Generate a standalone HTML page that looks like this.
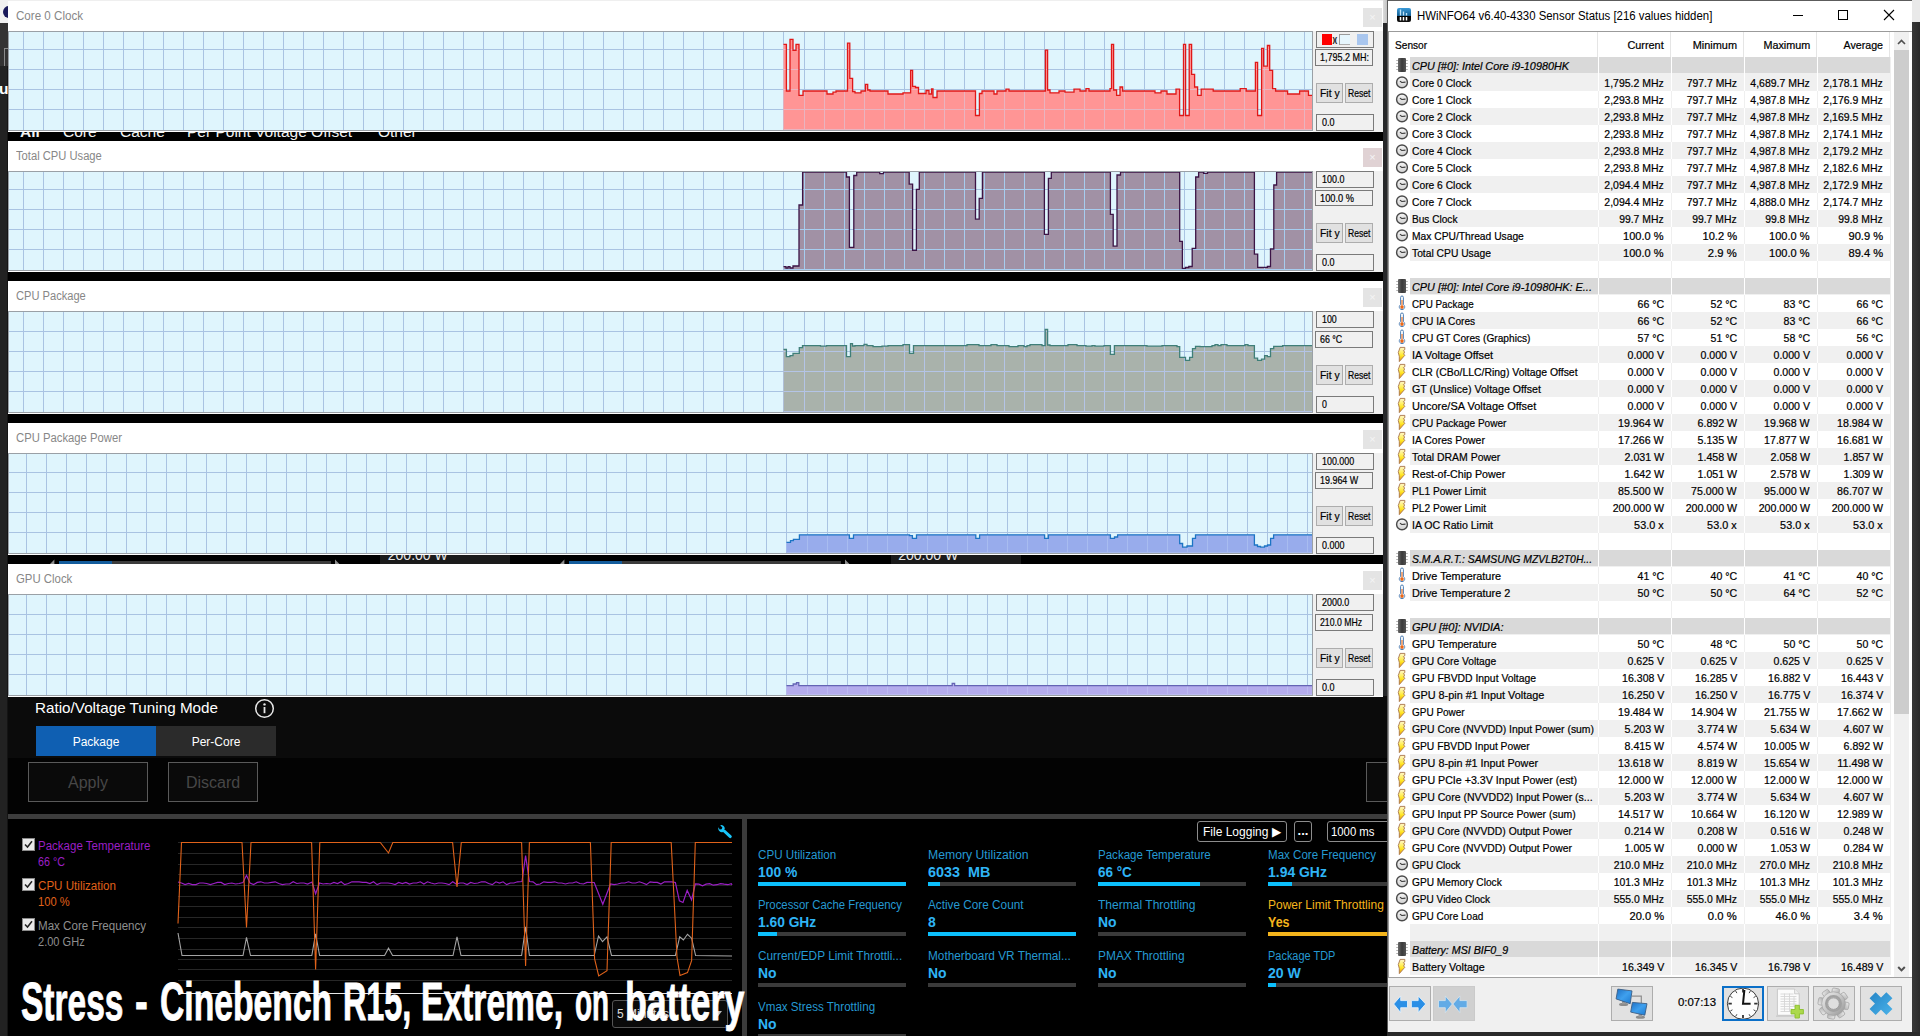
<!DOCTYPE html><html><head><meta charset="utf-8"><title>Stress - Cinebench R15</title><style>

*{margin:0;padding:0}
html,body{width:1920px;height:1036px;overflow:hidden;background:#000;font-family:"Liberation Sans",sans-serif}
body{position:relative;font-family:"Liberation Sans",sans-serif}
#ls{position:absolute;left:0;top:0;width:8px;height:1036px;background:#222;box-shadow:inset -1px 0 0 #141414}
#ls .t{position:absolute;left:0;top:0;width:8px;height:23px;background:#f1f1f1;overflow:hidden}
#ls .m{position:absolute;left:0;top:23px;width:8px;height:43px;background:#343333}
#ls .k{position:absolute;left:4px;top:48px;width:4px;height:18px;border-left:1px solid #8a8a8a;border-top:1px solid #8a8a8a;box-sizing:border-box}
#ls .u{position:absolute;left:-1px;top:80px;font-size:15.5px;line-height:18px;font-weight:bold;color:#fff;width:9px;overflow:hidden}
#ls .t i{position:absolute;left:3px;top:6px;width:12px;height:12px;border-radius:6px;background:#1a1a5a}
#topl{position:absolute;left:8px;top:0;width:1375px;height:1px;background:#efefef}
#rs1{position:absolute;left:1383px;top:0;width:5px;height:1036px;background:#27282a}
#rs1 .t{position:absolute;left:0;top:0;width:5px;height:23px;background:linear-gradient(90deg,#dcdcdc,#bdbdbd)}
#rs2{position:absolute;left:1912px;top:0;width:8px;height:1036px;background:linear-gradient(90deg,#383838,#2b2b2b)}
#rs2 .t{position:absolute;left:0;top:0;width:8px;height:22px;background:#e9e9e9}
#bs{position:absolute;left:1387px;top:1032px;width:533px;height:4px;background:#2a2a2a}

.f{display:inline-block;white-space:nowrap}


.pn{position:absolute;left:8px;width:1375px;background:#fff;overflow:hidden}
.pt{position:absolute;left:8px;font-size:12px;line-height:16px;color:#878787;white-space:nowrap}
.sd{position:absolute;left:1305px;width:70px;background:#f0f0f0}
.cl{position:absolute;left:1355px;width:19px;color:#f4f4f4;font-size:11px;text-align:center}
.cl span{position:absolute;left:0;right:0;top:2px;line-height:14px}
.gs{position:absolute;display:block}
.bx{position:absolute;box-sizing:border-box;border:1px solid #7a7a7a;background:#f0f0f0;overflow:hidden}
.bx i{position:absolute;top:2px;width:10.5px;height:10.5px}
.bx .xx{position:absolute;left:15.5px;top:2.5px;font-size:8px;line-height:10px;font-weight:bold;letter-spacing:-.6px;color:#111}
.bx .tx{position:absolute;left:5px;top:1px;font-size:10.3px;line-height:13px;color:#000;-webkit-text-stroke:.2px #000}
.bt{position:absolute;box-sizing:border-box;border:1px solid #adadad;background:#e1e1e1;font-size:11px;color:#000;text-align:center;overflow:hidden}
.bt .bs{position:absolute;top:2px;line-height:14px;font-size:10.5px;-webkit-text-stroke:.2px #000}


#xt{position:absolute;left:8px;top:696px;width:1379px;height:340px;background:#030303;overflow:hidden}
#xt .up{position:absolute;left:0;top:0;width:1379px;height:62px;background:#0b0b0b}
#xt .h1{position:absolute;left:27px;top:2px;font-size:15px;line-height:20px;color:#fff;white-space:nowrap;transform-origin:0 0}
#xt .tab{position:absolute;top:30px;height:30px;width:120px;color:#fff;font-size:12px;line-height:32px;text-align:center}
#xt .ab{position:absolute;top:66px;height:40px;box-sizing:border-box;border:1px solid #5a5a5a;background:#0a0a0a;color:#474747;font-size:16px;line-height:39px;text-align:center}
#xt .bar{position:absolute;left:0;top:118px;width:1379px;height:5px;background:#3d3d3d}
#xt .lp{position:absolute;left:0;top:123px;width:734px;height:217px;background:#000}
#xt .mid{position:absolute;left:734px;top:123px;width:5px;height:217px;background:#3b3b3b}
#xt .rp{position:absolute;left:739px;top:123px;width:640px;height:217px;background:#000}
.lg{position:absolute;left:30px;font-size:12px;line-height:16px;white-space:nowrap;transform-origin:0 0}
.cb{position:absolute;left:14px;width:13px;height:13px;box-sizing:border-box;border:1px solid #8a8a8a;background:#e9e9e9}
.cb svg{position:absolute;left:0;top:0}
.st{position:absolute;width:148px;height:50px}
.st .a{position:absolute;left:0;top:0;font-size:12px;line-height:16px;color:#2599d2;white-space:nowrap;transform-origin:0 0}
.st .b{position:absolute;left:0;top:16px;font-size:14px;line-height:18px;color:#2fb4f6;font-weight:bold;white-space:nowrap;transform-origin:0 0}
.st .c{position:absolute;left:0;top:35px;width:148px;height:4px;background:#3a3a3a}
.st .c i{position:absolute;left:0;top:0;height:4px;background:#0cbffc}
.st.y .a,.st.y .b{color:#f4b41c}
.st.y .c i{background:#f4b41c}
.xb{position:absolute;top:125px;height:21px;box-sizing:border-box;border:1px solid #8c8c8c;border-radius:3px;background:#000;color:#fff;font-size:13px;line-height:19px;white-space:nowrap}
#big{position:absolute;left:22px;top:970px;font-size:54.5px;line-height:64px;font-weight:bold;color:#fff;-webkit-text-stroke:0.9px #fff;white-space:nowrap;transform-origin:0 0;letter-spacing:0}
.gap{position:absolute;left:8px;width:1380px;background:#000;overflow:hidden}


#hw{position:absolute;left:1387px;top:0;width:525px;height:1032px;background:#fff;overflow:hidden}
#hw .bl{position:absolute;left:0;top:0;width:1px;height:1032px;background:#5a5a5a}
#hw .bt0{position:absolute;left:0;top:0;width:525px;height:1px;background:#5c5c5c}
#hw .ttl{position:absolute;left:30px;top:7px;font-size:12px;line-height:18px;color:#000;white-space:nowrap;transform-origin:0 0}
#hw .tl{position:absolute;left:1px;top:31px;width:524px;height:1px;background:#9b9b9b}
#hw .tll{position:absolute;left:1px;top:31px;width:1px;height:947px;background:#9b9b9b}
#hw .hd{position:absolute;top:32px;height:25px;font-size:11.6px;line-height:25px;color:#000;white-space:nowrap;-webkit-text-stroke:.22px #000}
#hw .hs{position:absolute;top:32px;width:1px;height:25px;background:#e5e5e5}
.r{position:absolute;left:8px;width:495px;height:17px;font-size:11.6px;line-height:17px;color:#000;white-space:nowrap;-webkit-text-stroke:.22px #000}
.r .bg{position:absolute;left:15px;top:0;width:480px;height:17px}
.r .bg i{position:absolute;top:0;width:1px;height:17px;background:#fff}
.r svg{position:absolute;left:0;top:0;width:14px;height:16px}
.r .n{position:absolute;left:16.5px;top:-.4px}
.r .v{position:absolute;top:-.4px}
.r.g .n{font-style:italic}
#hw .sb{position:absolute;left:507px;top:32px;width:15px;height:945px;background:#f0f0f0}
#hw .sb .th{position:absolute;left:0;top:18px;width:15px;height:664px;background:#cdcdcd}
#hw .tb{position:absolute;left:1px;top:978px;width:524px;height:54px;background:#f0f0f0}
#hw .tbl{position:absolute;left:1px;top:977px;width:524px;height:1px;background:#a0a0a0}
.tbn{position:absolute;top:986px;width:42px;height:35px;box-sizing:border-box;border:1px solid #adadad;background:#e1e1e1}
.tbn svg{position:absolute;left:0;top:0}

</style></head><body>

<svg width="0" height="0" style="position:absolute">
<defs>
<linearGradient id="gch" x1="0" x2="1" y1="0" y2="0"><stop offset="0" stop-color="#6a6a6a"/><stop offset=".5" stop-color="#3a3a3a"/><stop offset="1" stop-color="#555"/></linearGradient>
<linearGradient id="gck" x1="0" x2="0" y1="0" y2="1"><stop offset="0" stop-color="#f4f4f4"/><stop offset="1" stop-color="#d2d2d2"/></linearGradient>
<linearGradient id="gbx" gradientUnits="userSpaceOnUse" x1="8" y1="5" x2="32" y2="29"><stop offset="0" stop-color="#2484c6"/><stop offset="1" stop-color="#4cb4ea"/></linearGradient>
<linearGradient id="glt" x1="0" x2="0" y1="0" y2="1"><stop offset="0" stop-color="#fff6cc"/><stop offset=".3" stop-color="#fff27a"/><stop offset=".6" stop-color="#ffe622"/><stop offset="1" stop-color="#e68a0c"/></linearGradient>
<symbol id="ic" viewBox="0 0 14 16">
 <circle cx="7" cy="8.4" r="5.4" fill="url(#gck)" stroke="#4a4a4a" stroke-width="1.4"/>
 <path d="M4.9 7.1L6.8 8.5L10.5 8.1" stroke="#3a3a3a" stroke-width="1.1" fill="none"/>
</symbol>
<symbol id="it" viewBox="0 0 14 16">
 <path d="M5.6 2.4a1.4 1.4 0 0 1 2.8 0V9.6a2.7 2.7 0 1 1-2.8 0Z" fill="#fff" stroke="#4f7fb4" stroke-width="1"/>
 <path d="M6.45 5h1.1v5.6a1.6 1.6 0 1 1-1.1 0Z" fill="#e8681a"/>
</symbol>
<symbol id="il" viewBox="0 0 14 16">
 <path d="M5.1 1.4H9.8V3.7L8.4 4.6L9.6 6L8.6 8L9.8 9.3L4.3 15.6V10.5L3.3 6.5Z" fill="url(#glt)" stroke="#a87448" stroke-width=".9" stroke-linejoin="round"/>
</symbol>
<symbol id="ig" viewBox="0 0 14 16">
 <path d="M1.2 3.5h11.6M1.2 6.5h11.6M1.2 9.5h11.6M1.2 12.5h11.6" stroke="#b4b4b4" stroke-width="1"/>
 <rect x="3" y="1" width="8" height="14" rx="1" fill="url(#gch)"/>
</symbol>
</defs></svg>

<div id="ls"><div class="t"><i></i></div><div class="m"></div><div class="k"></div><div class="u">u</div></div>
<div class="gap" style="top:132px;height:9px"><div style="position:absolute;left:0;top:-9.5px;font-size:15.5px;line-height:18px;color:#f2f2f2;white-space:nowrap"><b style="position:absolute;left:12px">All</b><span style="position:absolute;left:55px">Core</span><span style="position:absolute;left:112px">Cache</span><span style="position:absolute;left:179px">Per Point Voltage Offset</span><span style="position:absolute;left:370px">Other</span></div></div>
<div class="gap" style="top:272px;height:9px"></div>
<div class="gap" style="top:414px;height:9px"></div>
<div class="gap" style="top:555px;height:9px"><div style="position:absolute;left:104.0px;top:6px;width:219px;height:3px;background:#3c3c3c"></div><div style="position:absolute;left:50.6px;top:6px;width:53.4px;height:3px;background:#135c9c"></div><svg style="position:absolute;left:39.6px;top:0" width="300" height="9" viewBox="0 0 300 9"><path d="M0 11L6.4 4.6V11Z" fill="#8e8e8e"/><path d="M287 4.6L293.4 11H287Z" fill="#8e8e8e"/></svg><div style="position:absolute;left:372.3px;top:0;width:130px;height:9px;background:#1b1b1b;overflow:hidden"><span style="position:absolute;left:7.5px;top:-8px;font-size:14px;line-height:16px;color:#e6e6e6;white-space:nowrap">200.00 W</span></div><div style="position:absolute;left:614.4px;top:6px;width:219px;height:3px;background:#3c3c3c"></div><div style="position:absolute;left:561.0px;top:6px;width:53.4px;height:3px;background:#135c9c"></div><svg style="position:absolute;left:550.0px;top:0" width="300" height="9" viewBox="0 0 300 9"><path d="M0 11L6.4 4.6V11Z" fill="#8e8e8e"/><path d="M287 4.6L293.4 11H287Z" fill="#8e8e8e"/></svg><div style="position:absolute;left:882.7px;top:0;width:130px;height:9px;background:#1b1b1b;overflow:hidden"><span style="position:absolute;left:7.5px;top:-8px;font-size:14px;line-height:16px;color:#e6e6e6;white-space:nowrap">200.00 W</span></div></div>
<div id="rs1"><div class="t"></div></div>
<div class="pn" style="top:1px;height:131px">
<div class="pt" style="top:7px"><span class="f" style="transform:scaleX(0.9660);transform-origin:0 0;">Core 0 Clock</span></div>
<div class="sd" style="top:30px;height:101px"></div>
<div class="cl" style="top:7px;height:19px;background:#e4e4e4"><span>×</span></div>
<svg class="gs" style="left:0;top:30px" width="1305" height="100" viewBox="8 31 1305 100" shape-rendering="crispEdges"><rect x="8" y="31" width="1305" height="100" fill="#dff5fd"/><path d="M23.5 31V130M43.5 31V130M63.5 31V130M83.5 31V130M103.5 31V130M123.5 31V130M143.5 31V130M163.5 31V130M183.5 31V130M203.5 31V130M223.5 31V130M243.5 31V130M263.5 31V130M283.5 31V130M303.5 31V130M323.5 31V130M343.5 31V130M363.5 31V130M383.5 31V130M403.5 31V130M423.5 31V130M443.5 31V130M463.5 31V130M483.5 31V130M503.5 31V130M523.5 31V130M543.5 31V130M563.5 31V130M583.5 31V130M603.5 31V130M623.5 31V130M643.5 31V130M663.5 31V130M683.5 31V130M703.5 31V130M723.5 31V130M743.5 31V130M763.5 31V130M783.5 31V130M804.5 31V130M824.5 31V130M844.5 31V130M864.5 31V130M884.5 31V130M904.5 31V130M924.5 31V130M944.5 31V130M964.5 31V130M984.5 31V130M1004.5 31V130M1024.5 31V130M1044.5 31V130M1064.5 31V130M1084.5 31V130M1104.5 31V130M1124.5 31V130M1144.5 31V130M1164.5 31V130M1184.5 31V130M1204.5 31V130M1224.5 31V130M1244.5 31V130M1264.5 31V130M1284.5 31V130M1304.5 31V130M8 109.5H1313M8 89.5H1313M8 69.5H1313M8 49.5H1313" stroke="#a9c3e2" stroke-width="1" fill="none"/><path d="M783.5 130.0L783.5 44.3L786.4 44.3L786.4 91.0L790.0 91.0L790.0 39.4L793.0 39.4L793.0 50.3L796.0 50.3L796.0 44.3L799.0 44.3L799.0 95.4L803.0 95.4L803.0 91.0L809.0 91.0L809.0 91.0L815.0 91.0L815.0 91.0L818.0 91.0L818.0 91.0L827.0 91.0L827.0 94.0L833.0 94.0L833.0 92.2L836.0 92.2L836.0 91.0L845.0 91.0L845.0 91.0L847.5 91.0L847.5 43.2L849.8 43.2L849.8 78.3L852.6 78.3L852.6 91.5L855.0 91.5L855.0 92.8L861.0 92.8L861.0 91.0L864.0 91.0L864.0 91.0L865.4 91.0L865.4 84.3L867.7 84.3L867.7 90.0L870.0 90.0L870.0 91.0L876.0 91.0L876.0 91.0L885.0 91.0L885.0 91.0L888.0 91.0L888.0 94.0L900.0 94.0L900.0 94.0L903.0 94.0L903.0 92.8L910.6 92.8L910.6 70.3L912.6 70.3L912.6 86.3L915.5 86.3L915.5 87.5L918.5 87.5L918.5 93.5L926.0 93.5L926.0 90.5L929.0 90.5L929.0 94.0L931.5 94.0L931.5 89.0L933.0 89.0L933.0 97.5L937.0 97.5L937.0 91.0L940.0 91.0L940.0 91.0L943.0 91.0L943.0 91.0L946.0 91.0L946.0 91.0L949.0 91.0L949.0 91.0L955.0 91.0L955.0 91.0L964.0 91.0L964.0 91.0L973.0 91.0L973.0 91.0L975.5 91.0L975.5 115.5L979.4 115.5L979.4 93.5L982.0 93.5L982.0 91.0L994.0 91.0L994.0 94.0L997.0 94.0L997.0 91.0L1006.0 91.0L1006.0 89.2L1009.0 89.2L1009.0 91.0L1012.0 91.0L1012.0 91.0L1024.0 91.0L1024.0 91.0L1033.0 91.0L1033.0 91.0L1042.0 91.0L1042.0 91.0L1045.4 91.0L1045.4 50.2L1047.6 50.2L1047.6 90.0L1050.0 90.0L1050.0 92.8L1059.0 92.8L1059.0 91.0L1065.0 91.0L1065.0 92.2L1074.0 92.2L1074.0 89.2L1080.0 89.2L1080.0 91.0L1086.0 91.0L1086.0 88.6L1089.0 88.6L1089.0 91.0L1092.0 91.0L1092.0 91.0L1101.0 91.0L1101.0 91.0L1110.0 91.0L1110.0 88.6L1111.5 88.6L1111.5 44.3L1113.6 44.3L1113.6 90.0L1116.6 90.0L1116.6 95.4L1120.0 95.4L1120.0 87.0L1122.6 87.0L1122.6 91.0L1125.0 91.0L1125.0 91.0L1131.0 91.0L1131.0 91.0L1140.0 91.0L1140.0 91.0L1143.0 91.0L1143.0 91.0L1149.0 91.0L1149.0 91.0L1155.0 91.0L1155.0 92.8L1161.0 92.8L1161.0 91.0L1164.0 91.0L1164.0 91.0L1167.0 91.0L1167.0 94.0L1176.0 94.0L1176.0 89.2L1179.6 89.2L1179.6 115.5L1183.5 115.5L1183.5 44.3L1185.6 44.3L1185.6 115.5L1189.2 115.5L1189.2 44.3L1191.6 44.3L1191.6 74.4L1194.6 74.4L1194.6 87.0L1197.6 87.0L1197.6 95.4L1201.2 95.4L1201.2 89.2L1213.2 89.2L1213.2 91.0L1222.2 91.0L1222.2 91.0L1231.2 91.0L1231.2 91.0L1237.2 91.0L1237.2 91.0L1240.2 91.0L1240.2 88.6L1246.2 88.6L1246.2 91.0L1255.4 91.0L1255.4 62.3L1257.6 62.3L1257.6 115.5L1261.6 115.5L1261.6 48.4L1263.6 48.4L1263.6 66.2L1267.4 66.2L1267.4 45.5L1269.7 45.5L1269.7 70.3L1272.6 70.3L1272.6 88.6L1275.6 88.6L1275.6 91.0L1287.6 91.0L1287.6 94.0L1299.6 94.0L1299.6 91.0L1308.5 91.0L1308.5 95.4L1312.5 95.4L1312.5 130.0 Z" fill="#ff9595" shape-rendering="auto"/><clipPath id="c1"><path d="M783.5 130.0L783.5 44.3L786.4 44.3L786.4 91.0L790.0 91.0L790.0 39.4L793.0 39.4L793.0 50.3L796.0 50.3L796.0 44.3L799.0 44.3L799.0 95.4L803.0 95.4L803.0 91.0L809.0 91.0L809.0 91.0L815.0 91.0L815.0 91.0L818.0 91.0L818.0 91.0L827.0 91.0L827.0 94.0L833.0 94.0L833.0 92.2L836.0 92.2L836.0 91.0L845.0 91.0L845.0 91.0L847.5 91.0L847.5 43.2L849.8 43.2L849.8 78.3L852.6 78.3L852.6 91.5L855.0 91.5L855.0 92.8L861.0 92.8L861.0 91.0L864.0 91.0L864.0 91.0L865.4 91.0L865.4 84.3L867.7 84.3L867.7 90.0L870.0 90.0L870.0 91.0L876.0 91.0L876.0 91.0L885.0 91.0L885.0 91.0L888.0 91.0L888.0 94.0L900.0 94.0L900.0 94.0L903.0 94.0L903.0 92.8L910.6 92.8L910.6 70.3L912.6 70.3L912.6 86.3L915.5 86.3L915.5 87.5L918.5 87.5L918.5 93.5L926.0 93.5L926.0 90.5L929.0 90.5L929.0 94.0L931.5 94.0L931.5 89.0L933.0 89.0L933.0 97.5L937.0 97.5L937.0 91.0L940.0 91.0L940.0 91.0L943.0 91.0L943.0 91.0L946.0 91.0L946.0 91.0L949.0 91.0L949.0 91.0L955.0 91.0L955.0 91.0L964.0 91.0L964.0 91.0L973.0 91.0L973.0 91.0L975.5 91.0L975.5 115.5L979.4 115.5L979.4 93.5L982.0 93.5L982.0 91.0L994.0 91.0L994.0 94.0L997.0 94.0L997.0 91.0L1006.0 91.0L1006.0 89.2L1009.0 89.2L1009.0 91.0L1012.0 91.0L1012.0 91.0L1024.0 91.0L1024.0 91.0L1033.0 91.0L1033.0 91.0L1042.0 91.0L1042.0 91.0L1045.4 91.0L1045.4 50.2L1047.6 50.2L1047.6 90.0L1050.0 90.0L1050.0 92.8L1059.0 92.8L1059.0 91.0L1065.0 91.0L1065.0 92.2L1074.0 92.2L1074.0 89.2L1080.0 89.2L1080.0 91.0L1086.0 91.0L1086.0 88.6L1089.0 88.6L1089.0 91.0L1092.0 91.0L1092.0 91.0L1101.0 91.0L1101.0 91.0L1110.0 91.0L1110.0 88.6L1111.5 88.6L1111.5 44.3L1113.6 44.3L1113.6 90.0L1116.6 90.0L1116.6 95.4L1120.0 95.4L1120.0 87.0L1122.6 87.0L1122.6 91.0L1125.0 91.0L1125.0 91.0L1131.0 91.0L1131.0 91.0L1140.0 91.0L1140.0 91.0L1143.0 91.0L1143.0 91.0L1149.0 91.0L1149.0 91.0L1155.0 91.0L1155.0 92.8L1161.0 92.8L1161.0 91.0L1164.0 91.0L1164.0 91.0L1167.0 91.0L1167.0 94.0L1176.0 94.0L1176.0 89.2L1179.6 89.2L1179.6 115.5L1183.5 115.5L1183.5 44.3L1185.6 44.3L1185.6 115.5L1189.2 115.5L1189.2 44.3L1191.6 44.3L1191.6 74.4L1194.6 74.4L1194.6 87.0L1197.6 87.0L1197.6 95.4L1201.2 95.4L1201.2 89.2L1213.2 89.2L1213.2 91.0L1222.2 91.0L1222.2 91.0L1231.2 91.0L1231.2 91.0L1237.2 91.0L1237.2 91.0L1240.2 91.0L1240.2 88.6L1246.2 88.6L1246.2 91.0L1255.4 91.0L1255.4 62.3L1257.6 62.3L1257.6 115.5L1261.6 115.5L1261.6 48.4L1263.6 48.4L1263.6 66.2L1267.4 66.2L1267.4 45.5L1269.7 45.5L1269.7 70.3L1272.6 70.3L1272.6 88.6L1275.6 88.6L1275.6 91.0L1287.6 91.0L1287.6 94.0L1299.6 94.0L1299.6 91.0L1308.5 91.0L1308.5 95.4L1312.5 95.4L1312.5 130.0 Z"/></clipPath><path d="M23.5 31V130M43.5 31V130M63.5 31V130M83.5 31V130M103.5 31V130M123.5 31V130M143.5 31V130M163.5 31V130M183.5 31V130M203.5 31V130M223.5 31V130M243.5 31V130M263.5 31V130M283.5 31V130M303.5 31V130M323.5 31V130M343.5 31V130M363.5 31V130M383.5 31V130M403.5 31V130M423.5 31V130M443.5 31V130M463.5 31V130M483.5 31V130M503.5 31V130M523.5 31V130M543.5 31V130M563.5 31V130M583.5 31V130M603.5 31V130M623.5 31V130M643.5 31V130M663.5 31V130M683.5 31V130M703.5 31V130M723.5 31V130M743.5 31V130M763.5 31V130M783.5 31V130M804.5 31V130M824.5 31V130M844.5 31V130M864.5 31V130M884.5 31V130M904.5 31V130M924.5 31V130M944.5 31V130M964.5 31V130M984.5 31V130M1004.5 31V130M1024.5 31V130M1044.5 31V130M1064.5 31V130M1084.5 31V130M1104.5 31V130M1124.5 31V130M1144.5 31V130M1164.5 31V130M1184.5 31V130M1204.5 31V130M1224.5 31V130M1244.5 31V130M1264.5 31V130M1284.5 31V130M1304.5 31V130M8 109.5H1313M8 89.5H1313M8 69.5H1313M8 49.5H1313M8 129.5H1313" stroke="#e8b4c0" stroke-width="1" fill="none" clip-path="url(#c1)"/><path d="M783.5 44.3L786.4 44.3L786.4 91.0L790.0 91.0L790.0 39.4L793.0 39.4L793.0 50.3L796.0 50.3L796.0 44.3L799.0 44.3L799.0 95.4L803.0 95.4L803.0 91.0L809.0 91.0L809.0 91.0L815.0 91.0L815.0 91.0L818.0 91.0L818.0 91.0L827.0 91.0L827.0 94.0L833.0 94.0L833.0 92.2L836.0 92.2L836.0 91.0L845.0 91.0L845.0 91.0L847.5 91.0L847.5 43.2L849.8 43.2L849.8 78.3L852.6 78.3L852.6 91.5L855.0 91.5L855.0 92.8L861.0 92.8L861.0 91.0L864.0 91.0L864.0 91.0L865.4 91.0L865.4 84.3L867.7 84.3L867.7 90.0L870.0 90.0L870.0 91.0L876.0 91.0L876.0 91.0L885.0 91.0L885.0 91.0L888.0 91.0L888.0 94.0L900.0 94.0L900.0 94.0L903.0 94.0L903.0 92.8L910.6 92.8L910.6 70.3L912.6 70.3L912.6 86.3L915.5 86.3L915.5 87.5L918.5 87.5L918.5 93.5L926.0 93.5L926.0 90.5L929.0 90.5L929.0 94.0L931.5 94.0L931.5 89.0L933.0 89.0L933.0 97.5L937.0 97.5L937.0 91.0L940.0 91.0L940.0 91.0L943.0 91.0L943.0 91.0L946.0 91.0L946.0 91.0L949.0 91.0L949.0 91.0L955.0 91.0L955.0 91.0L964.0 91.0L964.0 91.0L973.0 91.0L973.0 91.0L975.5 91.0L975.5 115.5L979.4 115.5L979.4 93.5L982.0 93.5L982.0 91.0L994.0 91.0L994.0 94.0L997.0 94.0L997.0 91.0L1006.0 91.0L1006.0 89.2L1009.0 89.2L1009.0 91.0L1012.0 91.0L1012.0 91.0L1024.0 91.0L1024.0 91.0L1033.0 91.0L1033.0 91.0L1042.0 91.0L1042.0 91.0L1045.4 91.0L1045.4 50.2L1047.6 50.2L1047.6 90.0L1050.0 90.0L1050.0 92.8L1059.0 92.8L1059.0 91.0L1065.0 91.0L1065.0 92.2L1074.0 92.2L1074.0 89.2L1080.0 89.2L1080.0 91.0L1086.0 91.0L1086.0 88.6L1089.0 88.6L1089.0 91.0L1092.0 91.0L1092.0 91.0L1101.0 91.0L1101.0 91.0L1110.0 91.0L1110.0 88.6L1111.5 88.6L1111.5 44.3L1113.6 44.3L1113.6 90.0L1116.6 90.0L1116.6 95.4L1120.0 95.4L1120.0 87.0L1122.6 87.0L1122.6 91.0L1125.0 91.0L1125.0 91.0L1131.0 91.0L1131.0 91.0L1140.0 91.0L1140.0 91.0L1143.0 91.0L1143.0 91.0L1149.0 91.0L1149.0 91.0L1155.0 91.0L1155.0 92.8L1161.0 92.8L1161.0 91.0L1164.0 91.0L1164.0 91.0L1167.0 91.0L1167.0 94.0L1176.0 94.0L1176.0 89.2L1179.6 89.2L1179.6 115.5L1183.5 115.5L1183.5 44.3L1185.6 44.3L1185.6 115.5L1189.2 115.5L1189.2 44.3L1191.6 44.3L1191.6 74.4L1194.6 74.4L1194.6 87.0L1197.6 87.0L1197.6 95.4L1201.2 95.4L1201.2 89.2L1213.2 89.2L1213.2 91.0L1222.2 91.0L1222.2 91.0L1231.2 91.0L1231.2 91.0L1237.2 91.0L1237.2 91.0L1240.2 91.0L1240.2 88.6L1246.2 88.6L1246.2 91.0L1255.4 91.0L1255.4 62.3L1257.6 62.3L1257.6 115.5L1261.6 115.5L1261.6 48.4L1263.6 48.4L1263.6 66.2L1267.4 66.2L1267.4 45.5L1269.7 45.5L1269.7 70.3L1272.6 70.3L1272.6 88.6L1275.6 88.6L1275.6 91.0L1287.6 91.0L1287.6 94.0L1299.6 94.0L1299.6 91.0L1308.5 91.0L1308.5 95.4L1312.5 95.4" fill="none" stroke="#e01818" stroke-width="1.3" shape-rendering="auto" stroke-linejoin="miter"/><rect x="8.5" y="31.5" width="1304" height="99" fill="none" stroke="#9aa0a6"/></svg>
<div class="bx" style="left:1308px;width:58px;top:30px;height:17px"><i style="left:4.6px;background:#f00"></i><b class="xx">)(</b><i style="left:22px;background:#e6f6fd;box-shadow:inset 1px 1px 0 #9a9a9a,inset 0 -1px 0 #b0b0b0"></i><i style="left:40px;background:#a9c6ee"></i></div>
<div class="bx" style="left:1307px;width:58px;top:48px;height:17px"><span class="f tx" style="transform:scaleX(0.8742);transform-origin:0 0;left:4px">1,795.2 MH:</span></div>
<div class="bt" style="left:1308px;width:27px;top:82px;height:20px"><span class="f bs" style="transform:scaleX(0.9877);transform-origin:0 0;left:3px">Fit y</span></div>
<div class="bt" style="left:1337px;width:28px;top:82px;height:20px"><span class="f bs" style="transform:scaleX(0.8164);transform-origin:0 0;left:2px">Reset</span></div>
<div class="bx" style="left:1308px;width:58px;top:113px;height:17px"><span class="f tx" style="transform:scaleX(0.8763);transform-origin:0 0;">0.0</span></div>
</div>
<div class="pn" style="top:141px;height:131px">
<div class="pt" style="top:7px"><span class="f" style="transform:scaleX(0.9321);transform-origin:0 0;">Total CPU Usage</span></div>
<div class="sd" style="top:30px;height:101px"></div>
<div class="cl" style="top:7px;height:19px;background:#e0d2d4"><span>×</span></div>
<svg class="gs" style="left:0;top:30px" width="1305" height="100" viewBox="8 171 1305 100" shape-rendering="crispEdges"><rect x="8" y="171" width="1305" height="100" fill="#dff5fd"/><path d="M23.5 171V270M43.5 171V270M63.5 171V270M83.5 171V270M103.5 171V270M123.5 171V270M143.5 171V270M163.5 171V270M183.5 171V270M203.5 171V270M223.5 171V270M243.5 171V270M263.5 171V270M283.5 171V270M303.5 171V270M323.5 171V270M343.5 171V270M363.5 171V270M383.5 171V270M403.5 171V270M423.5 171V270M443.5 171V270M463.5 171V270M483.5 171V270M503.5 171V270M523.5 171V270M543.5 171V270M563.5 171V270M583.5 171V270M603.5 171V270M623.5 171V270M643.5 171V270M663.5 171V270M683.5 171V270M703.5 171V270M723.5 171V270M743.5 171V270M763.5 171V270M783.5 171V270M804.5 171V270M824.5 171V270M844.5 171V270M864.5 171V270M884.5 171V270M904.5 171V270M924.5 171V270M944.5 171V270M964.5 171V270M984.5 171V270M1004.5 171V270M1024.5 171V270M1044.5 171V270M1064.5 171V270M1084.5 171V270M1104.5 171V270M1124.5 171V270M1144.5 171V270M1164.5 171V270M1184.5 171V270M1204.5 171V270M1224.5 171V270M1244.5 171V270M1264.5 171V270M1284.5 171V270M1304.5 171V270M8 249.5H1313M8 229.5H1313M8 209.5H1313M8 189.5H1313" stroke="#a9c3e2" stroke-width="1" fill="none"/><path d="M783.5 270.0L783.5 266.6L786.0 266.6L786.0 268.0L788.0 268.0L788.0 266.6L790.0 266.6L790.0 268.0L793.0 268.0L793.0 266.0L799.0 266.0L799.0 205.0L802.6 205.0L802.6 172.0L846.5 172.0L846.5 177.0L849.4 177.0L849.4 247.4L853.8 247.4L853.8 175.5L856.7 175.5L856.7 172.0L879.7 172.0L879.7 173.6L883.5 173.6L883.5 172.0L909.2 172.0L909.2 184.2L912.6 184.2L912.6 250.3L916.4 250.3L916.4 189.3L919.3 189.3L919.3 172.0L975.5 172.0L975.5 219.2L979.2 219.2L979.2 198.4L982.4 198.4L982.4 172.0L1044.4 172.0L1044.4 234.3L1048.4 234.3L1048.4 178.4L1051.3 178.4L1051.3 172.0L1110.4 172.0L1110.4 214.4L1113.2 214.4L1113.2 246.2L1117.0 246.2L1117.0 175.0L1120.5 175.0L1120.5 172.0L1179.7 172.0L1179.7 241.4L1182.4 241.4L1182.4 268.4L1185.5 268.4L1185.5 267.5L1188.8 267.5L1188.8 266.5L1192.2 266.5L1192.2 248.4L1195.7 248.4L1195.7 177.0L1198.6 177.0L1198.6 172.0L1203.6 172.0L1203.6 173.4L1207.5 173.4L1207.5 172.0L1254.4 172.0L1254.4 254.2L1257.7 254.2L1257.7 267.4L1267.4 267.4L1267.4 266.5L1270.5 266.5L1270.5 249.0L1273.8 249.0L1273.8 185.0L1276.6 185.0L1276.6 172.0L1312.5 172.0L1312.5 270.0 Z" fill="#a191a5" shape-rendering="auto"/><clipPath id="c141"><path d="M783.5 270.0L783.5 266.6L786.0 266.6L786.0 268.0L788.0 268.0L788.0 266.6L790.0 266.6L790.0 268.0L793.0 268.0L793.0 266.0L799.0 266.0L799.0 205.0L802.6 205.0L802.6 172.0L846.5 172.0L846.5 177.0L849.4 177.0L849.4 247.4L853.8 247.4L853.8 175.5L856.7 175.5L856.7 172.0L879.7 172.0L879.7 173.6L883.5 173.6L883.5 172.0L909.2 172.0L909.2 184.2L912.6 184.2L912.6 250.3L916.4 250.3L916.4 189.3L919.3 189.3L919.3 172.0L975.5 172.0L975.5 219.2L979.2 219.2L979.2 198.4L982.4 198.4L982.4 172.0L1044.4 172.0L1044.4 234.3L1048.4 234.3L1048.4 178.4L1051.3 178.4L1051.3 172.0L1110.4 172.0L1110.4 214.4L1113.2 214.4L1113.2 246.2L1117.0 246.2L1117.0 175.0L1120.5 175.0L1120.5 172.0L1179.7 172.0L1179.7 241.4L1182.4 241.4L1182.4 268.4L1185.5 268.4L1185.5 267.5L1188.8 267.5L1188.8 266.5L1192.2 266.5L1192.2 248.4L1195.7 248.4L1195.7 177.0L1198.6 177.0L1198.6 172.0L1203.6 172.0L1203.6 173.4L1207.5 173.4L1207.5 172.0L1254.4 172.0L1254.4 254.2L1257.7 254.2L1257.7 267.4L1267.4 267.4L1267.4 266.5L1270.5 266.5L1270.5 249.0L1273.8 249.0L1273.8 185.0L1276.6 185.0L1276.6 172.0L1312.5 172.0L1312.5 270.0 Z"/></clipPath><path d="M23.5 171V270M43.5 171V270M63.5 171V270M83.5 171V270M103.5 171V270M123.5 171V270M143.5 171V270M163.5 171V270M183.5 171V270M203.5 171V270M223.5 171V270M243.5 171V270M263.5 171V270M283.5 171V270M303.5 171V270M323.5 171V270M343.5 171V270M363.5 171V270M383.5 171V270M403.5 171V270M423.5 171V270M443.5 171V270M463.5 171V270M483.5 171V270M503.5 171V270M523.5 171V270M543.5 171V270M563.5 171V270M583.5 171V270M603.5 171V270M623.5 171V270M643.5 171V270M663.5 171V270M683.5 171V270M703.5 171V270M723.5 171V270M743.5 171V270M763.5 171V270M783.5 171V270M804.5 171V270M824.5 171V270M844.5 171V270M864.5 171V270M884.5 171V270M904.5 171V270M924.5 171V270M944.5 171V270M964.5 171V270M984.5 171V270M1004.5 171V270M1024.5 171V270M1044.5 171V270M1064.5 171V270M1084.5 171V270M1104.5 171V270M1124.5 171V270M1144.5 171V270M1164.5 171V270M1184.5 171V270M1204.5 171V270M1224.5 171V270M1244.5 171V270M1264.5 171V270M1284.5 171V270M1304.5 171V270M8 249.5H1313M8 229.5H1313M8 209.5H1313M8 189.5H1313M8 269.5H1313" stroke="#a6cdf0" stroke-width="1" fill="none" clip-path="url(#c141)"/><path d="M783.5 266.6L786.0 266.6L786.0 268.0L788.0 268.0L788.0 266.6L790.0 266.6L790.0 268.0L793.0 268.0L793.0 266.0L799.0 266.0L799.0 205.0L802.6 205.0L802.6 172.0L846.5 172.0L846.5 177.0L849.4 177.0L849.4 247.4L853.8 247.4L853.8 175.5L856.7 175.5L856.7 172.0L879.7 172.0L879.7 173.6L883.5 173.6L883.5 172.0L909.2 172.0L909.2 184.2L912.6 184.2L912.6 250.3L916.4 250.3L916.4 189.3L919.3 189.3L919.3 172.0L975.5 172.0L975.5 219.2L979.2 219.2L979.2 198.4L982.4 198.4L982.4 172.0L1044.4 172.0L1044.4 234.3L1048.4 234.3L1048.4 178.4L1051.3 178.4L1051.3 172.0L1110.4 172.0L1110.4 214.4L1113.2 214.4L1113.2 246.2L1117.0 246.2L1117.0 175.0L1120.5 175.0L1120.5 172.0L1179.7 172.0L1179.7 241.4L1182.4 241.4L1182.4 268.4L1185.5 268.4L1185.5 267.5L1188.8 267.5L1188.8 266.5L1192.2 266.5L1192.2 248.4L1195.7 248.4L1195.7 177.0L1198.6 177.0L1198.6 172.0L1203.6 172.0L1203.6 173.4L1207.5 173.4L1207.5 172.0L1254.4 172.0L1254.4 254.2L1257.7 254.2L1257.7 267.4L1267.4 267.4L1267.4 266.5L1270.5 266.5L1270.5 249.0L1273.8 249.0L1273.8 185.0L1276.6 185.0L1276.6 172.0L1312.5 172.0" fill="none" stroke="#3c1446" stroke-width="1.3" shape-rendering="auto" stroke-linejoin="miter"/><rect x="8.5" y="171.5" width="1304" height="99" fill="none" stroke="#9aa0a6"/></svg>
<div class="bx" style="left:1308px;width:58px;top:30px;height:17px"><span class="f tx" style="transform:scaleX(0.8681);transform-origin:0 0;">100.0</span></div>
<div class="bx" style="left:1307px;width:58px;top:49px;height:16px"><span class="f tx" style="transform:scaleX(0.8991);transform-origin:0 0;left:4px">100.0 %</span></div>
<div class="bt" style="left:1308px;width:27px;top:82px;height:20px"><span class="f bs" style="transform:scaleX(0.9877);transform-origin:0 0;left:3px">Fit y</span></div>
<div class="bt" style="left:1337px;width:28px;top:82px;height:20px"><span class="f bs" style="transform:scaleX(0.8164);transform-origin:0 0;left:2px">Reset</span></div>
<div class="bx" style="left:1308px;width:58px;top:113px;height:17px"><span class="f tx" style="transform:scaleX(0.8763);transform-origin:0 0;">0.0</span></div>
</div>
<div class="pn" style="top:281px;height:133px">
<div class="pt" style="top:7px"><span class="f" style="transform:scaleX(0.9260);transform-origin:0 0;">CPU Package</span></div>
<div class="sd" style="top:30px;height:103px"></div>
<div class="cl" style="top:7px;height:19px;background:#e4e4e4"><span>×</span></div>
<svg class="gs" style="left:0;top:30px" width="1305" height="102" viewBox="8 311 1305 102" shape-rendering="crispEdges"><rect x="8" y="311" width="1305" height="102" fill="#dff5fd"/><path d="M23.5 311V412M43.5 311V412M63.5 311V412M83.5 311V412M103.5 311V412M123.5 311V412M143.5 311V412M163.5 311V412M183.5 311V412M203.5 311V412M223.5 311V412M243.5 311V412M263.5 311V412M283.5 311V412M303.5 311V412M323.5 311V412M343.5 311V412M363.5 311V412M383.5 311V412M403.5 311V412M423.5 311V412M443.5 311V412M463.5 311V412M483.5 311V412M503.5 311V412M523.5 311V412M543.5 311V412M563.5 311V412M583.5 311V412M603.5 311V412M623.5 311V412M643.5 311V412M663.5 311V412M683.5 311V412M703.5 311V412M723.5 311V412M743.5 311V412M763.5 311V412M783.5 311V412M804.5 311V412M824.5 311V412M844.5 311V412M864.5 311V412M884.5 311V412M904.5 311V412M924.5 311V412M944.5 311V412M964.5 311V412M984.5 311V412M1004.5 311V412M1024.5 311V412M1044.5 311V412M1064.5 311V412M1084.5 311V412M1104.5 311V412M1124.5 311V412M1144.5 311V412M1164.5 311V412M1184.5 311V412M1204.5 311V412M1224.5 311V412M1244.5 311V412M1264.5 311V412M1284.5 311V412M1304.5 311V412M8 391.5H1313M8 371.5H1313M8 351.5H1313M8 331.5H1313" stroke="#a9c3e2" stroke-width="1" fill="none"/><path d="M783.5 412.0L783.5 349.3L786.4 349.3L786.4 356.6L790.0 356.6L790.0 355.6L793.0 355.6L793.0 353.4L799.3 353.4L799.3 347.6L802.5 347.6L802.5 345.6L805.5 345.6L805.5 345.6L814.5 345.6L814.5 345.6L820.5 345.6L820.5 346.2L826.5 346.2L826.5 345.6L835.5 345.6L835.5 345.6L844.5 345.6L844.5 345.6L846.5 345.6L846.5 356.6L850.5 356.6L850.5 343.6L852.5 343.6L852.5 346.0L855.0 346.0L855.0 345.6L864.0 345.6L864.0 344.4L867.0 344.4L867.0 345.6L873.0 345.6L873.0 346.6L882.0 346.6L882.0 346.2L888.0 346.2L888.0 345.6L891.0 345.6L891.0 345.6L903.0 345.6L903.0 344.6L909.5 344.6L909.5 353.4L913.5 353.4L913.5 345.6L916.0 345.6L916.0 345.6L928.0 345.6L928.0 345.6L940.0 345.6L940.0 345.6L943.0 345.6L943.0 345.6L952.0 345.6L952.0 345.6L958.0 345.6L958.0 345.6L961.0 345.6L961.0 345.6L967.0 345.6L967.0 344.6L979.0 344.6L979.0 345.6L991.0 345.6L991.0 344.6L997.0 344.6L997.0 345.6L1009.0 345.6L1009.0 346.6L1018.0 346.6L1018.0 345.6L1021.0 345.6L1021.0 345.6L1024.0 345.6L1024.0 346.6L1027.0 346.6L1027.0 345.6L1030.0 345.6L1030.0 344.6L1042.0 344.6L1042.0 345.6L1045.2 345.6L1045.2 329.3L1047.6 329.3L1047.6 345.0L1050.0 345.0L1050.0 345.6L1056.0 345.6L1056.0 345.6L1062.0 345.6L1062.0 345.6L1068.0 345.6L1068.0 344.6L1077.0 344.6L1077.0 345.6L1086.0 345.6L1086.0 346.2L1092.0 346.2L1092.0 345.6L1095.0 345.6L1095.0 346.2L1104.0 346.2L1104.0 345.6L1110.4 345.6L1110.4 354.4L1114.4 354.4L1114.4 345.6L1117.0 345.6L1117.0 345.6L1129.0 345.6L1129.0 345.6L1138.0 345.6L1138.0 345.6L1147.0 345.6L1147.0 346.2L1159.0 346.2L1159.0 346.2L1162.0 346.2L1162.0 345.6L1171.0 345.6L1171.0 345.6L1177.0 345.6L1177.0 346.6L1179.7 346.6L1179.7 357.3L1185.5 357.3L1185.5 360.3L1189.6 360.3L1189.6 357.3L1192.5 357.3L1192.5 348.6L1195.5 348.6L1195.5 346.4L1200.0 346.4L1200.0 346.6L1212.0 346.6L1212.0 345.6L1215.0 345.6L1215.0 344.6L1218.0 344.6L1218.0 345.6L1221.0 345.6L1221.0 344.6L1227.0 344.6L1227.0 345.6L1233.0 345.6L1233.0 345.6L1236.0 345.6L1236.0 345.6L1245.0 345.6L1245.0 344.6L1248.0 344.6L1248.0 345.6L1254.4 345.6L1254.4 358.2L1257.6 358.2L1257.6 360.4L1261.5 360.4L1261.5 359.2L1264.6 359.2L1264.6 355.6L1267.3 355.6L1267.3 356.6L1270.5 356.6L1270.5 348.6L1273.7 348.6L1273.7 346.4L1282.6 346.4L1282.6 345.6L1288.6 345.6L1288.6 345.6L1294.6 345.6L1294.6 345.6L1297.6 345.6L1297.6 345.6L1303.6 345.6L1303.6 345.6L1306.6 345.6L1306.6 345.6L1312.5 345.6L1312.5 412.0 Z" fill="#a9b2ab" shape-rendering="auto"/><clipPath id="c281"><path d="M783.5 412.0L783.5 349.3L786.4 349.3L786.4 356.6L790.0 356.6L790.0 355.6L793.0 355.6L793.0 353.4L799.3 353.4L799.3 347.6L802.5 347.6L802.5 345.6L805.5 345.6L805.5 345.6L814.5 345.6L814.5 345.6L820.5 345.6L820.5 346.2L826.5 346.2L826.5 345.6L835.5 345.6L835.5 345.6L844.5 345.6L844.5 345.6L846.5 345.6L846.5 356.6L850.5 356.6L850.5 343.6L852.5 343.6L852.5 346.0L855.0 346.0L855.0 345.6L864.0 345.6L864.0 344.4L867.0 344.4L867.0 345.6L873.0 345.6L873.0 346.6L882.0 346.6L882.0 346.2L888.0 346.2L888.0 345.6L891.0 345.6L891.0 345.6L903.0 345.6L903.0 344.6L909.5 344.6L909.5 353.4L913.5 353.4L913.5 345.6L916.0 345.6L916.0 345.6L928.0 345.6L928.0 345.6L940.0 345.6L940.0 345.6L943.0 345.6L943.0 345.6L952.0 345.6L952.0 345.6L958.0 345.6L958.0 345.6L961.0 345.6L961.0 345.6L967.0 345.6L967.0 344.6L979.0 344.6L979.0 345.6L991.0 345.6L991.0 344.6L997.0 344.6L997.0 345.6L1009.0 345.6L1009.0 346.6L1018.0 346.6L1018.0 345.6L1021.0 345.6L1021.0 345.6L1024.0 345.6L1024.0 346.6L1027.0 346.6L1027.0 345.6L1030.0 345.6L1030.0 344.6L1042.0 344.6L1042.0 345.6L1045.2 345.6L1045.2 329.3L1047.6 329.3L1047.6 345.0L1050.0 345.0L1050.0 345.6L1056.0 345.6L1056.0 345.6L1062.0 345.6L1062.0 345.6L1068.0 345.6L1068.0 344.6L1077.0 344.6L1077.0 345.6L1086.0 345.6L1086.0 346.2L1092.0 346.2L1092.0 345.6L1095.0 345.6L1095.0 346.2L1104.0 346.2L1104.0 345.6L1110.4 345.6L1110.4 354.4L1114.4 354.4L1114.4 345.6L1117.0 345.6L1117.0 345.6L1129.0 345.6L1129.0 345.6L1138.0 345.6L1138.0 345.6L1147.0 345.6L1147.0 346.2L1159.0 346.2L1159.0 346.2L1162.0 346.2L1162.0 345.6L1171.0 345.6L1171.0 345.6L1177.0 345.6L1177.0 346.6L1179.7 346.6L1179.7 357.3L1185.5 357.3L1185.5 360.3L1189.6 360.3L1189.6 357.3L1192.5 357.3L1192.5 348.6L1195.5 348.6L1195.5 346.4L1200.0 346.4L1200.0 346.6L1212.0 346.6L1212.0 345.6L1215.0 345.6L1215.0 344.6L1218.0 344.6L1218.0 345.6L1221.0 345.6L1221.0 344.6L1227.0 344.6L1227.0 345.6L1233.0 345.6L1233.0 345.6L1236.0 345.6L1236.0 345.6L1245.0 345.6L1245.0 344.6L1248.0 344.6L1248.0 345.6L1254.4 345.6L1254.4 358.2L1257.6 358.2L1257.6 360.4L1261.5 360.4L1261.5 359.2L1264.6 359.2L1264.6 355.6L1267.3 355.6L1267.3 356.6L1270.5 356.6L1270.5 348.6L1273.7 348.6L1273.7 346.4L1282.6 346.4L1282.6 345.6L1288.6 345.6L1288.6 345.6L1294.6 345.6L1294.6 345.6L1297.6 345.6L1297.6 345.6L1303.6 345.6L1303.6 345.6L1306.6 345.6L1306.6 345.6L1312.5 345.6L1312.5 412.0 Z"/></clipPath><path d="M23.5 311V412M43.5 311V412M63.5 311V412M83.5 311V412M103.5 311V412M123.5 311V412M143.5 311V412M163.5 311V412M183.5 311V412M203.5 311V412M223.5 311V412M243.5 311V412M263.5 311V412M283.5 311V412M303.5 311V412M323.5 311V412M343.5 311V412M363.5 311V412M383.5 311V412M403.5 311V412M423.5 311V412M443.5 311V412M463.5 311V412M483.5 311V412M503.5 311V412M523.5 311V412M543.5 311V412M563.5 311V412M583.5 311V412M603.5 311V412M623.5 311V412M643.5 311V412M663.5 311V412M683.5 311V412M703.5 311V412M723.5 311V412M743.5 311V412M763.5 311V412M783.5 311V412M804.5 311V412M824.5 311V412M844.5 311V412M864.5 311V412M884.5 311V412M904.5 311V412M924.5 311V412M944.5 311V412M964.5 311V412M984.5 311V412M1004.5 311V412M1024.5 311V412M1044.5 311V412M1064.5 311V412M1084.5 311V412M1104.5 311V412M1124.5 311V412M1144.5 311V412M1164.5 311V412M1184.5 311V412M1204.5 311V412M1224.5 311V412M1244.5 311V412M1264.5 311V412M1284.5 311V412M1304.5 311V412M8 391.5H1313M8 371.5H1313M8 351.5H1313M8 331.5H1313M8 411.5H1313" stroke="#b4c4e6" stroke-width="1" fill="none" clip-path="url(#c281)"/><path d="M783.5 349.3L786.4 349.3L786.4 356.6L790.0 356.6L790.0 355.6L793.0 355.6L793.0 353.4L799.3 353.4L799.3 347.6L802.5 347.6L802.5 345.6L805.5 345.6L805.5 345.6L814.5 345.6L814.5 345.6L820.5 345.6L820.5 346.2L826.5 346.2L826.5 345.6L835.5 345.6L835.5 345.6L844.5 345.6L844.5 345.6L846.5 345.6L846.5 356.6L850.5 356.6L850.5 343.6L852.5 343.6L852.5 346.0L855.0 346.0L855.0 345.6L864.0 345.6L864.0 344.4L867.0 344.4L867.0 345.6L873.0 345.6L873.0 346.6L882.0 346.6L882.0 346.2L888.0 346.2L888.0 345.6L891.0 345.6L891.0 345.6L903.0 345.6L903.0 344.6L909.5 344.6L909.5 353.4L913.5 353.4L913.5 345.6L916.0 345.6L916.0 345.6L928.0 345.6L928.0 345.6L940.0 345.6L940.0 345.6L943.0 345.6L943.0 345.6L952.0 345.6L952.0 345.6L958.0 345.6L958.0 345.6L961.0 345.6L961.0 345.6L967.0 345.6L967.0 344.6L979.0 344.6L979.0 345.6L991.0 345.6L991.0 344.6L997.0 344.6L997.0 345.6L1009.0 345.6L1009.0 346.6L1018.0 346.6L1018.0 345.6L1021.0 345.6L1021.0 345.6L1024.0 345.6L1024.0 346.6L1027.0 346.6L1027.0 345.6L1030.0 345.6L1030.0 344.6L1042.0 344.6L1042.0 345.6L1045.2 345.6L1045.2 329.3L1047.6 329.3L1047.6 345.0L1050.0 345.0L1050.0 345.6L1056.0 345.6L1056.0 345.6L1062.0 345.6L1062.0 345.6L1068.0 345.6L1068.0 344.6L1077.0 344.6L1077.0 345.6L1086.0 345.6L1086.0 346.2L1092.0 346.2L1092.0 345.6L1095.0 345.6L1095.0 346.2L1104.0 346.2L1104.0 345.6L1110.4 345.6L1110.4 354.4L1114.4 354.4L1114.4 345.6L1117.0 345.6L1117.0 345.6L1129.0 345.6L1129.0 345.6L1138.0 345.6L1138.0 345.6L1147.0 345.6L1147.0 346.2L1159.0 346.2L1159.0 346.2L1162.0 346.2L1162.0 345.6L1171.0 345.6L1171.0 345.6L1177.0 345.6L1177.0 346.6L1179.7 346.6L1179.7 357.3L1185.5 357.3L1185.5 360.3L1189.6 360.3L1189.6 357.3L1192.5 357.3L1192.5 348.6L1195.5 348.6L1195.5 346.4L1200.0 346.4L1200.0 346.6L1212.0 346.6L1212.0 345.6L1215.0 345.6L1215.0 344.6L1218.0 344.6L1218.0 345.6L1221.0 345.6L1221.0 344.6L1227.0 344.6L1227.0 345.6L1233.0 345.6L1233.0 345.6L1236.0 345.6L1236.0 345.6L1245.0 345.6L1245.0 344.6L1248.0 344.6L1248.0 345.6L1254.4 345.6L1254.4 358.2L1257.6 358.2L1257.6 360.4L1261.5 360.4L1261.5 359.2L1264.6 359.2L1264.6 355.6L1267.3 355.6L1267.3 356.6L1270.5 356.6L1270.5 348.6L1273.7 348.6L1273.7 346.4L1282.6 346.4L1282.6 345.6L1288.6 345.6L1288.6 345.6L1294.6 345.6L1294.6 345.6L1297.6 345.6L1297.6 345.6L1303.6 345.6L1303.6 345.6L1306.6 345.6L1306.6 345.6L1312.5 345.6" fill="none" stroke="#3f7f79" stroke-width="1.3" shape-rendering="auto" stroke-linejoin="miter"/><rect x="8.5" y="311.5" width="1304" height="101" fill="none" stroke="#9aa0a6"/></svg>
<div class="bx" style="left:1308px;width:58px;top:30px;height:17px"><span class="f tx" style="transform:scaleX(0.8576);transform-origin:0 0;">100</span></div>
<div class="bx" style="left:1307px;width:58px;top:50px;height:17px"><span class="f tx" style="transform:scaleX(0.8612);transform-origin:0 0;left:4px">66 °C</span></div>
<div class="bt" style="left:1308px;width:27px;top:84px;height:20px"><span class="f bs" style="transform:scaleX(0.9877);transform-origin:0 0;left:3px">Fit y</span></div>
<div class="bt" style="left:1337px;width:28px;top:84px;height:20px"><span class="f bs" style="transform:scaleX(0.8164);transform-origin:0 0;left:2px">Reset</span></div>
<div class="bx" style="left:1308px;width:58px;top:115px;height:17px"><span class="f tx" style="transform:scaleX(0.8568);transform-origin:0 0;">0</span></div>
</div>
<div class="pn" style="top:423px;height:132px">
<div class="pt" style="top:7px"><span class="f" style="transform:scaleX(0.9404);transform-origin:0 0;">CPU Package Power</span></div>
<div class="sd" style="top:30px;height:102px"></div>
<div class="cl" style="top:7px;height:19px;background:#e4e4e4"><span>×</span></div>
<svg class="gs" style="left:0;top:30px" width="1305" height="101" viewBox="8 453 1305 101" shape-rendering="crispEdges"><rect x="8" y="453" width="1305" height="101" fill="#dff5fd"/><path d="M26.5 453V553M46.5 453V553M66.5 453V553M86.5 453V553M106.5 453V553M126.5 453V553M146.5 453V553M166.5 453V553M186.5 453V553M206.5 453V553M226.5 453V553M246.5 453V553M266.5 453V553M286.5 453V553M306.5 453V553M326.5 453V553M346.5 453V553M366.5 453V553M386.5 453V553M406.5 453V553M426.5 453V553M446.5 453V553M466.5 453V553M486.5 453V553M506.5 453V553M526.5 453V553M546.5 453V553M566.5 453V553M586.5 453V553M606.5 453V553M626.5 453V553M646.5 453V553M666.5 453V553M686.5 453V553M706.5 453V553M726.5 453V553M746.5 453V553M766.5 453V553M786.5 453V553M807.5 453V553M827.5 453V553M847.5 453V553M867.5 453V553M887.5 453V553M907.5 453V553M927.5 453V553M947.5 453V553M967.5 453V553M987.5 453V553M1007.5 453V553M1027.5 453V553M1047.5 453V553M1067.5 453V553M1087.5 453V553M1107.5 453V553M1127.5 453V553M1147.5 453V553M1167.5 453V553M1187.5 453V553M1207.5 453V553M1227.5 453V553M1247.5 453V553M1267.5 453V553M1287.5 453V553M1307.5 453V553M8 532.5H1313M8 512.5H1313M8 492.5H1313M8 472.5H1313" stroke="#a9c3e2" stroke-width="1" fill="none"/><path d="M786.5 553.0L786.5 542.4L790.5 542.4L790.5 540.6L793.4 540.6L793.4 539.4L799.4 539.4L799.4 534.8L849.4 534.8L849.4 538.4L853.5 538.4L853.5 534.8L909.5 534.8L909.5 535.6L912.4 535.6L912.4 538.4L916.5 538.4L916.5 534.8L975.8 534.8L975.8 538.4L979.6 538.4L979.6 534.8L1044.6 534.8L1044.6 538.4L1048.4 538.4L1048.4 534.8L1110.4 534.8L1110.4 538.4L1114.5 538.4L1114.5 537.0L1117.6 537.0L1117.6 534.8L1179.7 534.8L1179.7 543.5L1182.6 543.5L1182.6 547.2L1187.0 547.2L1187.0 546.0L1192.5 546.0L1192.5 538.4L1195.5 538.4L1195.5 534.8L1254.4 534.8L1254.4 545.0L1257.5 545.0L1257.5 546.5L1260.5 546.5L1260.5 547.2L1264.5 547.2L1264.5 546.0L1267.5 546.0L1267.5 545.0L1270.6 545.0L1270.6 538.4L1273.6 538.4L1273.6 534.8L1312.5 534.8L1312.5 553.0 Z" fill="#98acec" shape-rendering="auto"/><clipPath id="c423"><path d="M786.5 553.0L786.5 542.4L790.5 542.4L790.5 540.6L793.4 540.6L793.4 539.4L799.4 539.4L799.4 534.8L849.4 534.8L849.4 538.4L853.5 538.4L853.5 534.8L909.5 534.8L909.5 535.6L912.4 535.6L912.4 538.4L916.5 538.4L916.5 534.8L975.8 534.8L975.8 538.4L979.6 538.4L979.6 534.8L1044.6 534.8L1044.6 538.4L1048.4 538.4L1048.4 534.8L1110.4 534.8L1110.4 538.4L1114.5 538.4L1114.5 537.0L1117.6 537.0L1117.6 534.8L1179.7 534.8L1179.7 543.5L1182.6 543.5L1182.6 547.2L1187.0 547.2L1187.0 546.0L1192.5 546.0L1192.5 538.4L1195.5 538.4L1195.5 534.8L1254.4 534.8L1254.4 545.0L1257.5 545.0L1257.5 546.5L1260.5 546.5L1260.5 547.2L1264.5 547.2L1264.5 546.0L1267.5 546.0L1267.5 545.0L1270.6 545.0L1270.6 538.4L1273.6 538.4L1273.6 534.8L1312.5 534.8L1312.5 553.0 Z"/></clipPath><path d="M26.5 453V553M46.5 453V553M66.5 453V553M86.5 453V553M106.5 453V553M126.5 453V553M146.5 453V553M166.5 453V553M186.5 453V553M206.5 453V553M226.5 453V553M246.5 453V553M266.5 453V553M286.5 453V553M306.5 453V553M326.5 453V553M346.5 453V553M366.5 453V553M386.5 453V553M406.5 453V553M426.5 453V553M446.5 453V553M466.5 453V553M486.5 453V553M506.5 453V553M526.5 453V553M546.5 453V553M566.5 453V553M586.5 453V553M606.5 453V553M626.5 453V553M646.5 453V553M666.5 453V553M686.5 453V553M706.5 453V553M726.5 453V553M746.5 453V553M766.5 453V553M786.5 453V553M807.5 453V553M827.5 453V553M847.5 453V553M867.5 453V553M887.5 453V553M907.5 453V553M927.5 453V553M947.5 453V553M967.5 453V553M987.5 453V553M1007.5 453V553M1027.5 453V553M1047.5 453V553M1067.5 453V553M1087.5 453V553M1107.5 453V553M1127.5 453V553M1147.5 453V553M1167.5 453V553M1187.5 453V553M1207.5 453V553M1227.5 453V553M1247.5 453V553M1267.5 453V553M1287.5 453V553M1307.5 453V553M8 532.5H1313M8 512.5H1313M8 492.5H1313M8 472.5H1313M8 552.5H1313" stroke="#a8bcf0" stroke-width="1" fill="none" clip-path="url(#c423)"/><path d="M786.5 542.4L790.5 542.4L790.5 540.6L793.4 540.6L793.4 539.4L799.4 539.4L799.4 534.8L849.4 534.8L849.4 538.4L853.5 538.4L853.5 534.8L909.5 534.8L909.5 535.6L912.4 535.6L912.4 538.4L916.5 538.4L916.5 534.8L975.8 534.8L975.8 538.4L979.6 538.4L979.6 534.8L1044.6 534.8L1044.6 538.4L1048.4 538.4L1048.4 534.8L1110.4 534.8L1110.4 538.4L1114.5 538.4L1114.5 537.0L1117.6 537.0L1117.6 534.8L1179.7 534.8L1179.7 543.5L1182.6 543.5L1182.6 547.2L1187.0 547.2L1187.0 546.0L1192.5 546.0L1192.5 538.4L1195.5 538.4L1195.5 534.8L1254.4 534.8L1254.4 545.0L1257.5 545.0L1257.5 546.5L1260.5 546.5L1260.5 547.2L1264.5 547.2L1264.5 546.0L1267.5 546.0L1267.5 545.0L1270.6 545.0L1270.6 538.4L1273.6 538.4L1273.6 534.8L1312.5 534.8" fill="none" stroke="#1c74c4" stroke-width="1.3" shape-rendering="auto" stroke-linejoin="miter"/><rect x="8.5" y="453.5" width="1304" height="100" fill="none" stroke="#9aa0a6"/></svg>
<div class="bx" style="left:1308px;width:58px;top:30px;height:17px"><span class="f tx" style="transform:scaleX(0.8650);transform-origin:0 0;">100.000</span></div>
<div class="bx" style="left:1307px;width:58px;top:49px;height:17px"><span class="f tx" style="transform:scaleX(0.8672);transform-origin:0 0;left:4px">19.964 W</span></div>
<div class="bt" style="left:1308px;width:27px;top:83px;height:20px"><span class="f bs" style="transform:scaleX(0.9877);transform-origin:0 0;left:3px">Fit y</span></div>
<div class="bt" style="left:1337px;width:28px;top:83px;height:20px"><span class="f bs" style="transform:scaleX(0.8164);transform-origin:0 0;left:2px">Reset</span></div>
<div class="bx" style="left:1308px;width:58px;top:114px;height:17px"><span class="f tx" style="transform:scaleX(0.8681);transform-origin:0 0;">0.000</span></div>
</div>
<div class="pn" style="top:564px;height:133px">
<div class="pt" style="top:7px"><span class="f" style="transform:scaleX(0.9487);transform-origin:0 0;">GPU Clock</span></div>
<div class="sd" style="top:30px;height:103px"></div>
<div class="cl" style="top:7px;height:19px;background:#e4e4e4"><span>×</span></div>
<svg class="gs" style="left:0;top:30px" width="1305" height="102" viewBox="8 594 1305 102" shape-rendering="crispEdges"><rect x="8" y="594" width="1305" height="102" fill="#dff5fd"/><path d="M26.5 594V695M46.5 594V695M66.5 594V695M86.5 594V695M106.5 594V695M126.5 594V695M146.5 594V695M166.5 594V695M186.5 594V695M206.5 594V695M226.5 594V695M246.5 594V695M266.5 594V695M286.5 594V695M306.5 594V695M326.5 594V695M346.5 594V695M366.5 594V695M386.5 594V695M406.5 594V695M426.5 594V695M446.5 594V695M466.5 594V695M486.5 594V695M506.5 594V695M526.5 594V695M546.5 594V695M566.5 594V695M586.5 594V695M606.5 594V695M626.5 594V695M646.5 594V695M666.5 594V695M686.5 594V695M706.5 594V695M726.5 594V695M746.5 594V695M766.5 594V695M786.5 594V695M807.5 594V695M827.5 594V695M847.5 594V695M867.5 594V695M887.5 594V695M907.5 594V695M927.5 594V695M947.5 594V695M967.5 594V695M987.5 594V695M1007.5 594V695M1027.5 594V695M1047.5 594V695M1067.5 594V695M1087.5 594V695M1107.5 594V695M1127.5 594V695M1147.5 594V695M1167.5 594V695M1187.5 594V695M1207.5 594V695M1227.5 594V695M1247.5 594V695M1267.5 594V695M1287.5 594V695M1307.5 594V695M8 674.5H1313M8 654.5H1313M8 634.5H1313M8 614.5H1313" stroke="#a9c3e2" stroke-width="1" fill="none"/><path d="M786.5 695.0L786.5 685.6L793.2 685.6L793.2 684.0L796.5 684.0L796.5 682.6L798.8 682.6L798.8 685.6L952.2 685.6L952.2 683.3L954.6 683.3L954.6 685.6L1312.5 685.6L1312.5 695.0 Z" fill="#b4acec" shape-rendering="auto"/><clipPath id="c564"><path d="M786.5 695.0L786.5 685.6L793.2 685.6L793.2 684.0L796.5 684.0L796.5 682.6L798.8 682.6L798.8 685.6L952.2 685.6L952.2 683.3L954.6 683.3L954.6 685.6L1312.5 685.6L1312.5 695.0 Z"/></clipPath><path d="M26.5 594V695M46.5 594V695M66.5 594V695M86.5 594V695M106.5 594V695M126.5 594V695M146.5 594V695M166.5 594V695M186.5 594V695M206.5 594V695M226.5 594V695M246.5 594V695M266.5 594V695M286.5 594V695M306.5 594V695M326.5 594V695M346.5 594V695M366.5 594V695M386.5 594V695M406.5 594V695M426.5 594V695M446.5 594V695M466.5 594V695M486.5 594V695M506.5 594V695M526.5 594V695M546.5 594V695M566.5 594V695M586.5 594V695M606.5 594V695M626.5 594V695M646.5 594V695M666.5 594V695M686.5 594V695M706.5 594V695M726.5 594V695M746.5 594V695M766.5 594V695M786.5 594V695M807.5 594V695M827.5 594V695M847.5 594V695M867.5 594V695M887.5 594V695M907.5 594V695M927.5 594V695M947.5 594V695M967.5 594V695M987.5 594V695M1007.5 594V695M1027.5 594V695M1047.5 594V695M1067.5 594V695M1087.5 594V695M1107.5 594V695M1127.5 594V695M1147.5 594V695M1167.5 594V695M1187.5 594V695M1207.5 594V695M1227.5 594V695M1247.5 594V695M1267.5 594V695M1287.5 594V695M1307.5 594V695M8 674.5H1313M8 654.5H1313M8 634.5H1313M8 614.5H1313M8 694.5H1313" stroke="#bcbcf0" stroke-width="1" fill="none" clip-path="url(#c564)"/><path d="M786.5 685.6L793.2 685.6L793.2 684.0L796.5 684.0L796.5 682.6L798.8 682.6L798.8 685.6L952.2 685.6L952.2 683.3L954.6 683.3L954.6 685.6L1312.5 685.6" fill="none" stroke="#6464b4" stroke-width="1.3" shape-rendering="auto" stroke-linejoin="miter"/><rect x="8.5" y="594.5" width="1304" height="101" fill="none" stroke="#9aa0a6"/></svg>
<div class="bx" style="left:1308px;width:58px;top:30px;height:17px"><span class="f tx" style="transform:scaleX(0.8665);transform-origin:0 0;">2000.0</span></div>
<div class="bx" style="left:1307px;width:58px;top:50px;height:17px"><span class="f tx" style="transform:scaleX(0.8476);transform-origin:0 0;left:4px">210.0 MHz</span></div>
<div class="bt" style="left:1308px;width:27px;top:84px;height:20px"><span class="f bs" style="transform:scaleX(0.9877);transform-origin:0 0;left:3px">Fit y</span></div>
<div class="bt" style="left:1337px;width:28px;top:84px;height:20px"><span class="f bs" style="transform:scaleX(0.8164);transform-origin:0 0;left:2px">Reset</span></div>
<div class="bx" style="left:1308px;width:58px;top:115px;height:17px"><span class="f tx" style="transform:scaleX(0.8763);transform-origin:0 0;">0.0</span></div>
</div>
<div id="topl"></div>
<div id="xt">
<div class="up"></div>
<div class="h1"><span class="f" style="transform:scaleX(1.0160);transform-origin:0 0;">Ratio/Voltage Tuning Mode</span></div>
<svg style="position:absolute;left:246px;top:2px" width="22" height="22" viewBox="0 0 22 22"><circle cx="10.5" cy="10.5" r="8.8" fill="none" stroke="#e8e8e8" stroke-width="1.5"/><circle cx="10.5" cy="6.4" r="1.2" fill="#e8e8e8"/><path d="M10.5 9v6.2" stroke="#e8e8e8" stroke-width="1.8"/></svg>
<div class="tab" style="left:28px;background:#0f5fb2"><span id="xtp" style="display:inline-block">Package</span></div>
<div class="tab" style="left:148px;background:#2b2b2b"><span style="display:inline-block">Per-Core</span></div>
<div class="ab" style="left:20px;width:120px">Apply</div>
<div class="ab" style="left:160px;width:90px">Discard</div>
<div class="ab" style="left:1358px;width:40px"></div>
<div class="bar"></div><div class="lp"></div><div class="mid"></div><div class="rp"></div>
<div style="position:absolute;left:0;top:0;width:1375px;height:1px;background:#fff"></div>
</div>
<div class="cb" style="left:22px;top:838px"><svg width="11" height="11" viewBox="0 0 11 11"><path d="M2 5.5L4.5 8L9 2.2" stroke="#222" stroke-width="1.5" fill="none"/></svg></div>
<div class="lg" style="left:38px;top:838px;color:#9a1fc4"><span class="f" style="transform:scaleX(0.9591);transform-origin:0 0;">Package Temperature</span></div>
<div class="lg" style="left:38px;top:854px;color:#9a1fc4"><span class="f" style="transform:scaleX(0.8920);transform-origin:0 0;">66 °C</span></div>
<div class="cb" style="left:22px;top:878px"><svg width="11" height="11" viewBox="0 0 11 11"><path d="M2 5.5L4.5 8L9 2.2" stroke="#222" stroke-width="1.5" fill="none"/></svg></div>
<div class="lg" style="left:38px;top:878px;color:#e0621a"><span class="f" style="transform:scaleX(0.9665);transform-origin:0 0;">CPU Utilization</span></div>
<div class="lg" style="left:38px;top:894px;color:#e0621a"><span class="f" style="transform:scaleX(0.9315);transform-origin:0 0;">100 %</span></div>
<div class="cb" style="left:22px;top:918px"><svg width="11" height="11" viewBox="0 0 11 11"><path d="M2 5.5L4.5 8L9 2.2" stroke="#222" stroke-width="1.5" fill="none"/></svg></div>
<div class="lg" style="left:38px;top:918px;color:#8f8f8f"><span class="f" style="transform:scaleX(0.9648);transform-origin:0 0;">Max Core Frequency</span></div>
<div class="lg" style="left:38px;top:934px;color:#8f8f8f"><span class="f" style="transform:scaleX(0.9210);transform-origin:0 0;">2.00 GHz</span></div>
<svg style="position:absolute;left:170px;top:820px" width="572" height="180" viewBox="170 820 572 180"><path d="M178 842.5H732M178 853.5H732M178 864.5H732M178 874.5H732M178 885.5H732M178 896.5H732M178 906.5H732M178 917.5H732M178 927.5H732M178 938.5H732M178 949.5H732M178 959.5H732M178 969.5H732M178 980.5H732" stroke="#272727" stroke-width="1" fill="none" shape-rendering="crispEdges"/><path d="M178 993.5H732" stroke="#e8e8e8" stroke-width="1" shape-rendering="crispEdges"/><polyline points="178.0,933.0 182.0,955.5 243.0,955.5 246.5,937.3 250.5,955.5 311.8,955.5 315.6,933.8 319.6,955.5 384.6,955.5 388.5,948.2 392.6,955.5 453.0,955.5 457.0,936.8 461.0,955.5 521.6,955.5 525.6,926.9 529.4,955.5 594.2,955.5 598.5,936.0 602.5,941.6 607.0,936.8 611.5,955.5 675.4,955.5 679.7,936.8 683.4,940.0 687.5,934.3 691.6,938.2 695.6,955.5 732.0,956.0" fill="none" stroke="#a4a4a4" stroke-width="1.1"/><polyline points="178.0,882.0 181.5,883.0 185.1,884.6 188.7,883.5 192.3,884.6 195.9,884.6 199.5,883.0 203.1,883.0 206.7,883.5 210.3,884.6 213.9,883.5 217.5,882.4 221.1,882.4 224.7,884.6 228.3,883.5 231.9,883.0 235.5,884.0 239.1,883.5 243.0,882.5 246.5,875.3 250.0,883.0 253.6,884.6 257.2,882.4 260.8,881.8 264.4,883.0 268.0,883.0 271.6,882.4 275.2,881.8 278.8,883.5 282.4,884.6 286.0,884.0 289.6,884.0 293.2,881.8 296.8,883.5 300.4,883.0 304.0,883.0 307.6,884.0 312.0,882.0 315.6,893.8 319.5,883.0 323.1,884.0 326.7,883.5 330.3,884.0 333.9,882.4 337.5,883.5 341.1,881.8 344.7,884.6 348.3,883.5 351.9,881.8 355.5,881.8 359.1,881.8 362.7,882.4 366.3,882.4 369.9,883.5 373.5,881.8 377.1,884.6 380.7,883.0 384.3,883.0 387.9,883.0 391.5,883.5 395.1,884.6 398.7,882.4 402.3,883.5 405.9,882.4 409.5,884.0 413.1,883.0 416.7,883.0 420.3,881.8 423.9,884.0 427.5,881.8 431.1,883.0 434.7,884.0 438.3,883.0 441.9,883.0 445.5,883.5 449.1,884.6 452.7,881.8 456.3,884.0 459.9,883.0 463.5,883.0 467.1,884.6 470.7,882.4 474.3,883.5 477.9,883.0 481.5,881.8 485.1,881.8 488.7,883.5 492.3,884.6 495.9,881.8 499.5,883.0 503.1,881.8 506.7,884.6 510.3,883.0 513.9,883.0 517.5,881.8 522.0,881.5 525.6,855.6 529.4,881.5 533.0,881.8 536.6,884.6 540.2,884.0 543.8,881.8 547.4,882.4 551.0,882.4 554.6,881.8 558.2,883.0 561.8,883.0 565.4,884.0 569.0,883.0 572.6,883.0 576.2,881.8 579.8,883.5 583.4,884.0 587.0,882.4 594.2,882.5 602.8,904.3 610.5,884.0 614.1,884.6 617.7,884.0 621.3,883.0 624.9,883.0 628.5,881.8 632.1,883.0 635.7,883.0 639.3,881.8 642.9,883.0 646.5,884.6 650.1,881.8 653.7,882.4 657.3,882.4 660.9,884.0 664.5,881.8 668.1,881.8 671.7,881.8 675.4,882.5 679.4,900.8 683.0,902.5 687.2,890.4 691.6,900.0 695.3,884.0 698.9,884.2 702.5,885.8 706.1,884.2 709.7,883.6 713.3,885.2 716.9,884.7 720.5,883.6 724.1,884.2 727.7,884.7 731.3,883.6 732.0,885.0" fill="none" stroke="#9a1fc4" stroke-width="1.2"/><polyline points="178.0,923.4 181.5,842.5 242.0,842.5 246.5,927.4 251.0,842.5 311.6,842.5 315.6,969.4 319.8,842.5 380.3,842.5 388.5,853.0 392.8,842.5 452.6,842.5 457.0,887.0 461.3,842.5 521.6,842.5 525.6,966.0 529.4,842.5 590.4,842.5 594.6,959.0 598.7,976.0 607.0,970.8 611.2,842.5 671.2,842.5 677.0,957.3 680.0,975.5 687.5,972.6 691.6,960.7 695.3,842.5 732.0,842.5" fill="none" stroke="#e0621a" stroke-width="1.1"/></svg>
<svg style="position:absolute;left:718px;top:824px" width="16" height="16" viewBox="0 0 16 16"><path d="M12.3 12.6L6.2 7" stroke="#19c4f8" stroke-width="3" stroke-linecap="round"/><path d="M6.8 4.6A3.6 3.6 0 0 0 2.2 1.2L4.4 3.4L3.6 5.2L1.6 5.6L0.6 3.2A3.6 3.6 0 0 0 5 8Z" fill="#19c4f8"/></svg>
<div style="position:absolute;left:612px;top:1000px;width:116px;height:28px;box-sizing:border-box;border:1px solid #555;border-radius:3px;background:#0a0a0a;color:#ddd;font-size:12px;line-height:26px;padding-left:4px">5 Minutes<svg style="position:absolute;right:5px;top:10px" width="9" height="6" viewBox="0 0 9 6"><path d="M0 0H9L4.5 6Z" fill="#bbb"/></svg></div>
<div class="st" style="left:757.6px;top:847.0px"><div class="a"><span class="f" style="transform:scaleX(0.9690);transform-origin:0 0;">CPU Utilization</span></div><div class="b"><span class="f" style="transform:scaleX(0.9898);transform-origin:0 0;">100 %</span></div><div class="c" style="width:148px"><i style="width:148.0px"></i></div></div>
<div class="st" style="left:927.6px;top:847.0px"><div class="a"><span class="f" style="transform:scaleX(1.0182);transform-origin:0 0;">Memory Utilization</span></div><div class="b"><span class="f" style="transform:scaleX(1.0263);transform-origin:0 0;">6033&nbsp; MB</span></div><div class="c" style="width:148px"><i style="width:12.5px"></i></div></div>
<div class="st" style="left:1097.6px;top:847.0px"><div class="a"><span class="f" style="transform:scaleX(0.9617);transform-origin:0 0;">Package Temperature</span></div><div class="b"><span class="f" style="transform:scaleX(0.9610);transform-origin:0 0;">66 °C</span></div><div class="c" style="width:148px"><i style="width:102.0px"></i></div></div>
<div class="st" style="left:1267.6px;top:847.0px"><div class="a"><span class="f" style="transform:scaleX(0.9639);transform-origin:0 0;">Max Core Frequency</span></div><div class="b"><span class="f" style="transform:scaleX(0.9959);transform-origin:0 0;">1.94 GHz</span></div><div class="c" style="width:130px"><i style="width:24.0px"></i></div></div>
<div class="st" style="left:757.6px;top:897.4px"><div class="a"><span class="f" style="transform:scaleX(0.9462);transform-origin:0 0;">Processor Cache Frequency</span></div><div class="b"><span class="f" style="transform:scaleX(0.9841);transform-origin:0 0;">1.60 GHz</span></div><div class="c" style="width:148px"><i style="width:19.0px"></i></div></div>
<div class="st" style="left:927.6px;top:897.4px"><div class="a"><span class="f" style="transform:scaleX(0.9806);transform-origin:0 0;">Active Core Count</span></div><div class="b"><span class="f" style="transform:scaleX(1.0004);transform-origin:0 0;">8</span></div><div class="c" style="width:148px"><i style="width:148.0px"></i></div></div>
<div class="st" style="left:1097.6px;top:897.4px"><div class="a"><span class="f" style="transform:scaleX(1.0035);transform-origin:0 0;">Thermal Throttling</span></div><div class="b"><span class="f" style="transform:scaleX(0.9962);transform-origin:0 0;">No</span></div><div class="c" style="width:148px"><i style="width:0.0px"></i></div></div>
<div class="st y" style="left:1267.6px;top:897.4px"><div class="a"><span class="f" style="transform:scaleX(0.9998);transform-origin:0 0;">Power Limit Throttling</span></div><div class="b"><span class="f" style="transform:scaleX(0.8906);transform-origin:0 0;">Yes</span></div><div class="c" style="width:130px"><i style="width:130.0px"></i></div></div>
<div class="st" style="left:757.6px;top:947.8px"><div class="a"><span class="f" style="transform:scaleX(0.9858);transform-origin:0 0;">Current/EDP Limit Throttli...</span></div><div class="b"><span class="f" style="transform:scaleX(0.9962);transform-origin:0 0;">No</span></div><div class="c" style="width:148px"><i style="width:0.0px"></i></div></div>
<div class="st" style="left:927.6px;top:947.8px"><div class="a"><span class="f" style="transform:scaleX(0.9837);transform-origin:0 0;">Motherboard VR Thermal...</span></div><div class="b"><span class="f" style="transform:scaleX(0.9962);transform-origin:0 0;">No</span></div><div class="c" style="width:148px"><i style="width:0.0px"></i></div></div>
<div class="st" style="left:1097.6px;top:947.8px"><div class="a"><span class="f" style="transform:scaleX(0.9936);transform-origin:0 0;">PMAX Throttling</span></div><div class="b"><span class="f" style="transform:scaleX(0.9962);transform-origin:0 0;">No</span></div><div class="c" style="width:148px"><i style="width:0.0px"></i></div></div>
<div class="st" style="left:1267.6px;top:947.8px"><div class="a"><span class="f" style="transform:scaleX(0.9129);transform-origin:0 0;">Package TDP</span></div><div class="b"><span class="f" style="transform:scaleX(1.0065);transform-origin:0 0;">20 W</span></div><div class="c" style="width:130px"><i style="width:8.0px"></i></div></div>
<div class="st" style="left:757.6px;top:999.0px"><div class="a"><span class="f" style="transform:scaleX(0.9665);transform-origin:0 0;">Vmax Stress Throttling</span></div><div class="b"><span class="f" style="transform:scaleX(0.9962);transform-origin:0 0;">No</span></div><div class="c" style="width:148px"><i style="width:0.0px"></i></div></div>
<div class="xb" style="left:1197px;width:90px;top:821px"><span style="position:absolute;left:5px;top:0"><span class="f" style="transform:scaleX(0.9236);transform-origin:0 0;">File Logging ▶</span></span></div>
<div class="xb" style="left:1294px;width:18px;top:821px;text-align:center;font-weight:bold;line-height:18px">...</div>
<div class="xb" style="left:1327px;width:70px;top:821px;border-radius:3px 0 0 3px"><span style="position:absolute;left:2.5px;top:0"><span class="f" style="transform:scaleX(0.8722);transform-origin:0 0;">1000 ms</span></span></div>
<div id="big"><span class="f" style="transform:scaleX(0.6145);transform-origin:0 0;position:absolute;top:0;left:-1.3px">Stress</span><span class="f" style="transform:scaleX(0.7050);transform-origin:0 0;position:absolute;top:0;left:113.3px">-</span><span class="f" style="transform:scaleX(0.6181);transform-origin:0 0;position:absolute;top:0;left:138.3px">Cinebench</span><span class="f" style="transform:scaleX(0.5933);transform-origin:0 0;position:absolute;top:0;left:320.6px">R15,</span><span class="f" style="transform:scaleX(0.6167);transform-origin:0 0;position:absolute;top:0;left:399.4px">Extreme,</span><span class="f" style="transform:scaleX(0.5121);transform-origin:0 0;position:absolute;top:0;left:552.8px">on</span><span class="f" style="transform:scaleX(0.6565);transform-origin:0 0;position:absolute;top:0;left:603.3px">battery</span></div>
<div id="rs2"><div class="t"></div></div><div id="bs"></div>
<div id="hw" style="--sx:.91">
<div class="bt0"></div><div class="bl"></div>
<svg style="position:absolute;left:10px;top:8px" width="14" height="14" viewBox="0 0 14 14"><defs><linearGradient id="gti" x1="0" x2="0" y1="0" y2="1"><stop offset="0" stop-color="#3a9ad8"/><stop offset=".55" stop-color="#135f94"/><stop offset=".56" stop-color="#000"/><stop offset="1" stop-color="#111"/></linearGradient></defs><rect x="0" y="0" width="14" height="14" rx="2" fill="url(#gti)"/><path d="M3.5 1.5v6M6.5 3.5v4M9.5 5v2.5" stroke="#bfe4fa" stroke-width="1.4"/><path d="M3.5 9v3.6M6.5 9v3.6M9.5 9v3.6" stroke="#fff" stroke-width="1.5"/></svg>
<div class="ttl"><span class="f" style="transform:scaleX(0.9500);transform-origin:0 0;">HWiNFO64 v6.40-4330 Sensor Status [216 values hidden]</span></div>
<svg style="position:absolute;left:400px;top:5px" width="120" height="22" viewBox="0 0 120 22" shape-rendering="crispEdges"><path d="M6 10.5H16" stroke="#000" fill="none"/><rect x="51.5" y="5.5" width="9" height="9" stroke="#000" fill="none"/><path d="M97 5L107 15M107 5L97 15" stroke="#000" stroke-width="1.1" fill="none" shape-rendering="auto"/></svg>
<div class="tl"></div><div class="tll"></div>
<div class="hd" style="left:8px"><span class="f" style="transform:scaleX(0.8735);transform-origin:0 0;">Sensor</span></div>
<div class="hd" style="right:248px"><span class="f" style="transform:scaleX(0.9381);transform-origin:100% 0;">Current</span></div>
<div class="hd" style="right:175px"><span class="f" style="transform:scaleX(0.9415);transform-origin:100% 0;">Minimum</span></div>
<div class="hd" style="right:102px"><span class="f" style="transform:scaleX(0.9322);transform-origin:100% 0;">Maximum</span></div>
<div class="hd" style="right:29px"><span class="f" style="transform:scaleX(0.9187);transform-origin:100% 0;">Average</span></div>
<div class="hs" style="left:210px"></div>
<div class="hs" style="left:283px"></div>
<div class="hs" style="left:356px"></div>
<div class="hs" style="left:429px"></div>
<div class="hs" style="left:502px"></div>
<div style="position:absolute;left:211px;top:57px;width:1px;height:918px;background:#efefef"></div>
<div style="position:absolute;left:284px;top:57px;width:1px;height:918px;background:#efefef"></div>
<div style="position:absolute;left:357px;top:57px;width:1px;height:918px;background:#efefef"></div>
<div style="position:absolute;left:430px;top:57px;width:1px;height:918px;background:#efefef"></div>
<div style="position:absolute;left:503px;top:57px;width:1px;height:918px;background:#efefef"></div>
<div class="r g" style="top:57px"><div class="bg" style="background:#d9d9d9;height:16px;border-bottom:1px solid #f0f0f0"><i style="left:188px"></i><i style="left:261px"></i><i style="left:334px"></i><i style="left:407px"></i></div><svg><use href="#ig"/></svg><span class="f n" style="transform:scaleX(0.9333);transform-origin:0 0;">CPU [#0]: Intel Core i9-10980HK</span></div>
<div class="r" style="top:74px"><div class="bg" style="background:#f0f0f0"><i style="left:188px"></i><i style="left:261px"></i><i style="left:334px"></i><i style="left:407px"></i></div><svg><use href="#ic"/></svg><span class="f n" style="transform:scaleX(0.8858);transform-origin:0 0;">Core 0 Clock</span><span class="f v" style="transform:scaleX(0.9037);transform-origin:100% 0;right:226px">1,795.2 MHz</span><span class="f v" style="transform:scaleX(0.8972);transform-origin:100% 0;right:153px">797.7 MHz</span><span class="f v" style="transform:scaleX(0.9037);transform-origin:100% 0;right:80px">4,689.7 MHz</span><span class="f v" style="transform:scaleX(0.9037);transform-origin:100% 0;right:7px">2,178.1 MHz</span></div>
<div class="r" style="top:91px"><svg><use href="#ic"/></svg><span class="f n" style="transform:scaleX(0.8858);transform-origin:0 0;">Core 1 Clock</span><span class="f v" style="transform:scaleX(0.9037);transform-origin:100% 0;right:226px">2,293.8 MHz</span><span class="f v" style="transform:scaleX(0.8972);transform-origin:100% 0;right:153px">797.7 MHz</span><span class="f v" style="transform:scaleX(0.9037);transform-origin:100% 0;right:80px">4,987.8 MHz</span><span class="f v" style="transform:scaleX(0.9037);transform-origin:100% 0;right:7px">2,176.9 MHz</span></div>
<div class="r" style="top:108px"><div class="bg" style="background:#f0f0f0"><i style="left:188px"></i><i style="left:261px"></i><i style="left:334px"></i><i style="left:407px"></i></div><svg><use href="#ic"/></svg><span class="f n" style="transform:scaleX(0.8858);transform-origin:0 0;">Core 2 Clock</span><span class="f v" style="transform:scaleX(0.9037);transform-origin:100% 0;right:226px">2,293.8 MHz</span><span class="f v" style="transform:scaleX(0.8972);transform-origin:100% 0;right:153px">797.7 MHz</span><span class="f v" style="transform:scaleX(0.9037);transform-origin:100% 0;right:80px">4,987.8 MHz</span><span class="f v" style="transform:scaleX(0.9037);transform-origin:100% 0;right:7px">2,169.5 MHz</span></div>
<div class="r" style="top:125px"><svg><use href="#ic"/></svg><span class="f n" style="transform:scaleX(0.8858);transform-origin:0 0;">Core 3 Clock</span><span class="f v" style="transform:scaleX(0.9037);transform-origin:100% 0;right:226px">2,293.8 MHz</span><span class="f v" style="transform:scaleX(0.8972);transform-origin:100% 0;right:153px">797.7 MHz</span><span class="f v" style="transform:scaleX(0.9037);transform-origin:100% 0;right:80px">4,987.8 MHz</span><span class="f v" style="transform:scaleX(0.9037);transform-origin:100% 0;right:7px">2,174.1 MHz</span></div>
<div class="r" style="top:142px"><div class="bg" style="background:#f0f0f0"><i style="left:188px"></i><i style="left:261px"></i><i style="left:334px"></i><i style="left:407px"></i></div><svg><use href="#ic"/></svg><span class="f n" style="transform:scaleX(0.8858);transform-origin:0 0;">Core 4 Clock</span><span class="f v" style="transform:scaleX(0.9037);transform-origin:100% 0;right:226px">2,293.8 MHz</span><span class="f v" style="transform:scaleX(0.8972);transform-origin:100% 0;right:153px">797.7 MHz</span><span class="f v" style="transform:scaleX(0.9037);transform-origin:100% 0;right:80px">4,987.8 MHz</span><span class="f v" style="transform:scaleX(0.9037);transform-origin:100% 0;right:7px">2,179.2 MHz</span></div>
<div class="r" style="top:159px"><svg><use href="#ic"/></svg><span class="f n" style="transform:scaleX(0.8858);transform-origin:0 0;">Core 5 Clock</span><span class="f v" style="transform:scaleX(0.9037);transform-origin:100% 0;right:226px">2,293.8 MHz</span><span class="f v" style="transform:scaleX(0.8972);transform-origin:100% 0;right:153px">797.7 MHz</span><span class="f v" style="transform:scaleX(0.9037);transform-origin:100% 0;right:80px">4,987.8 MHz</span><span class="f v" style="transform:scaleX(0.9037);transform-origin:100% 0;right:7px">2,182.6 MHz</span></div>
<div class="r" style="top:176px"><div class="bg" style="background:#f0f0f0"><i style="left:188px"></i><i style="left:261px"></i><i style="left:334px"></i><i style="left:407px"></i></div><svg><use href="#ic"/></svg><span class="f n" style="transform:scaleX(0.8858);transform-origin:0 0;">Core 6 Clock</span><span class="f v" style="transform:scaleX(0.9037);transform-origin:100% 0;right:226px">2,094.4 MHz</span><span class="f v" style="transform:scaleX(0.8972);transform-origin:100% 0;right:153px">797.7 MHz</span><span class="f v" style="transform:scaleX(0.9037);transform-origin:100% 0;right:80px">4,987.8 MHz</span><span class="f v" style="transform:scaleX(0.9037);transform-origin:100% 0;right:7px">2,172.9 MHz</span></div>
<div class="r" style="top:193px"><svg><use href="#ic"/></svg><span class="f n" style="transform:scaleX(0.8858);transform-origin:0 0;">Core 7 Clock</span><span class="f v" style="transform:scaleX(0.9037);transform-origin:100% 0;right:226px">2,094.4 MHz</span><span class="f v" style="transform:scaleX(0.8972);transform-origin:100% 0;right:153px">797.7 MHz</span><span class="f v" style="transform:scaleX(0.9037);transform-origin:100% 0;right:80px">4,888.0 MHz</span><span class="f v" style="transform:scaleX(0.9037);transform-origin:100% 0;right:7px">2,174.7 MHz</span></div>
<div class="r" style="top:210px"><div class="bg" style="background:#f0f0f0"><i style="left:188px"></i><i style="left:261px"></i><i style="left:334px"></i><i style="left:407px"></i></div><svg><use href="#ic"/></svg><span class="f n" style="transform:scaleX(0.8711);transform-origin:0 0;">Bus Clock</span><span class="f v" style="transform:scaleX(0.8956);transform-origin:100% 0;right:226px">99.7 MHz</span><span class="f v" style="transform:scaleX(0.8956);transform-origin:100% 0;right:153px">99.7 MHz</span><span class="f v" style="transform:scaleX(0.8956);transform-origin:100% 0;right:80px">99.8 MHz</span><span class="f v" style="transform:scaleX(0.8956);transform-origin:100% 0;right:7px">99.8 MHz</span></div>
<div class="r" style="top:227px"><svg><use href="#ic"/></svg><span class="f n" style="transform:scaleX(0.8852);transform-origin:0 0;">Max CPU/Thread Usage</span><span class="f v" style="transform:scaleX(0.9518);transform-origin:100% 0;right:226px">100.0 %</span><span class="f v" style="transform:scaleX(0.9594);transform-origin:100% 0;right:153px">10.2 %</span><span class="f v" style="transform:scaleX(0.9518);transform-origin:100% 0;right:80px">100.0 %</span><span class="f v" style="transform:scaleX(0.9594);transform-origin:100% 0;right:7px">90.9 %</span></div>
<div class="r" style="top:244px"><div class="bg" style="background:#f0f0f0"><i style="left:188px"></i><i style="left:261px"></i><i style="left:334px"></i><i style="left:407px"></i></div><svg><use href="#ic"/></svg><span class="f n" style="transform:scaleX(0.8875);transform-origin:0 0;">Total CPU Usage</span><span class="f v" style="transform:scaleX(0.9518);transform-origin:100% 0;right:226px">100.0 %</span><span class="f v" style="transform:scaleX(0.9707);transform-origin:100% 0;right:153px">2.9 %</span><span class="f v" style="transform:scaleX(0.9518);transform-origin:100% 0;right:80px">100.0 %</span><span class="f v" style="transform:scaleX(0.9594);transform-origin:100% 0;right:7px">89.4 %</span></div>
<div class="r" style="top:261px"></div>
<div class="r g" style="top:278px"><div class="bg" style="background:#d9d9d9;height:16px;border-bottom:1px solid #f0f0f0"><i style="left:188px"></i><i style="left:261px"></i><i style="left:334px"></i><i style="left:407px"></i></div><svg><use href="#ig"/></svg><span class="f n" style="transform:scaleX(0.9368);transform-origin:0 0;">CPU [#0]: Intel Core i9-10980HK: E...</span></div>
<div class="r" style="top:295px"><svg><use href="#it"/></svg><span class="f n" style="transform:scaleX(0.8486);transform-origin:0 0;">CPU Package</span><span class="f v" style="transform:scaleX(0.9113);transform-origin:100% 0;right:226px">66 °C</span><span class="f v" style="transform:scaleX(0.9113);transform-origin:100% 0;right:153px">52 °C</span><span class="f v" style="transform:scaleX(0.9113);transform-origin:100% 0;right:80px">83 °C</span><span class="f v" style="transform:scaleX(0.9113);transform-origin:100% 0;right:7px">66 °C</span></div>
<div class="r" style="top:312px"><div class="bg" style="background:#f0f0f0"><i style="left:188px"></i><i style="left:261px"></i><i style="left:334px"></i><i style="left:407px"></i></div><svg><use href="#it"/></svg><span class="f n" style="transform:scaleX(0.8744);transform-origin:0 0;">CPU IA Cores</span><span class="f v" style="transform:scaleX(0.9113);transform-origin:100% 0;right:226px">66 °C</span><span class="f v" style="transform:scaleX(0.9113);transform-origin:100% 0;right:153px">52 °C</span><span class="f v" style="transform:scaleX(0.9113);transform-origin:100% 0;right:80px">83 °C</span><span class="f v" style="transform:scaleX(0.9113);transform-origin:100% 0;right:7px">66 °C</span></div>
<div class="r" style="top:329px"><svg><use href="#it"/></svg><span class="f n" style="transform:scaleX(0.8769);transform-origin:0 0;">CPU GT Cores (Graphics)</span><span class="f v" style="transform:scaleX(0.9113);transform-origin:100% 0;right:226px">57 °C</span><span class="f v" style="transform:scaleX(0.9113);transform-origin:100% 0;right:153px">51 °C</span><span class="f v" style="transform:scaleX(0.9113);transform-origin:100% 0;right:80px">58 °C</span><span class="f v" style="transform:scaleX(0.9113);transform-origin:100% 0;right:7px">56 °C</span></div>
<div class="r" style="top:346px"><div class="bg" style="background:#f0f0f0"><i style="left:188px"></i><i style="left:261px"></i><i style="left:334px"></i><i style="left:407px"></i></div><svg><use href="#il"/></svg><span class="f n" style="transform:scaleX(0.9406);transform-origin:0 0;">IA Voltage Offset</span><span class="f v" style="transform:scaleX(0.9119);transform-origin:100% 0;right:226px">0.000 V</span><span class="f v" style="transform:scaleX(0.9119);transform-origin:100% 0;right:153px">0.000 V</span><span class="f v" style="transform:scaleX(0.9119);transform-origin:100% 0;right:80px">0.000 V</span><span class="f v" style="transform:scaleX(0.9119);transform-origin:100% 0;right:7px">0.000 V</span></div>
<div class="r" style="top:363px"><svg><use href="#il"/></svg><span class="f n" style="transform:scaleX(0.8994);transform-origin:0 0;">CLR (CBo/LLC/Ring) Voltage Offset</span><span class="f v" style="transform:scaleX(0.9119);transform-origin:100% 0;right:226px">0.000 V</span><span class="f v" style="transform:scaleX(0.9119);transform-origin:100% 0;right:153px">0.000 V</span><span class="f v" style="transform:scaleX(0.9119);transform-origin:100% 0;right:80px">0.000 V</span><span class="f v" style="transform:scaleX(0.9119);transform-origin:100% 0;right:7px">0.000 V</span></div>
<div class="r" style="top:380px"><div class="bg" style="background:#f0f0f0"><i style="left:188px"></i><i style="left:261px"></i><i style="left:334px"></i><i style="left:407px"></i></div><svg><use href="#il"/></svg><span class="f n" style="transform:scaleX(0.9165);transform-origin:0 0;">GT (Unslice) Voltage Offset</span><span class="f v" style="transform:scaleX(0.9119);transform-origin:100% 0;right:226px">0.000 V</span><span class="f v" style="transform:scaleX(0.9119);transform-origin:100% 0;right:153px">0.000 V</span><span class="f v" style="transform:scaleX(0.9119);transform-origin:100% 0;right:80px">0.000 V</span><span class="f v" style="transform:scaleX(0.9119);transform-origin:100% 0;right:7px">0.000 V</span></div>
<div class="r" style="top:397px"><svg><use href="#il"/></svg><span class="f n" style="transform:scaleX(0.9462);transform-origin:0 0;">Uncore/SA Voltage Offset</span><span class="f v" style="transform:scaleX(0.9119);transform-origin:100% 0;right:226px">0.000 V</span><span class="f v" style="transform:scaleX(0.9119);transform-origin:100% 0;right:153px">0.000 V</span><span class="f v" style="transform:scaleX(0.9119);transform-origin:100% 0;right:80px">0.000 V</span><span class="f v" style="transform:scaleX(0.9119);transform-origin:100% 0;right:7px">0.000 V</span></div>
<div class="r" style="top:414px"><div class="bg" style="background:#f0f0f0"><i style="left:188px"></i><i style="left:261px"></i><i style="left:334px"></i><i style="left:407px"></i></div><svg><use href="#il"/></svg><span class="f n" style="transform:scaleX(0.8665);transform-origin:0 0;">CPU Package Power</span><span class="f v" style="transform:scaleX(0.9179);transform-origin:100% 0;right:226px">19.964 W</span><span class="f v" style="transform:scaleX(0.9191);transform-origin:100% 0;right:153px">6.892 W</span><span class="f v" style="transform:scaleX(0.9179);transform-origin:100% 0;right:80px">19.968 W</span><span class="f v" style="transform:scaleX(0.9179);transform-origin:100% 0;right:7px">18.984 W</span></div>
<div class="r" style="top:431px"><svg><use href="#il"/></svg><span class="f n" style="transform:scaleX(0.9053);transform-origin:0 0;">IA Cores Power</span><span class="f v" style="transform:scaleX(0.9179);transform-origin:100% 0;right:226px">17.266 W</span><span class="f v" style="transform:scaleX(0.9191);transform-origin:100% 0;right:153px">5.135 W</span><span class="f v" style="transform:scaleX(0.9179);transform-origin:100% 0;right:80px">17.877 W</span><span class="f v" style="transform:scaleX(0.9179);transform-origin:100% 0;right:7px">16.681 W</span></div>
<div class="r" style="top:448px"><div class="bg" style="background:#f0f0f0"><i style="left:188px"></i><i style="left:261px"></i><i style="left:334px"></i><i style="left:407px"></i></div><svg><use href="#il"/></svg><span class="f n" style="transform:scaleX(0.9022);transform-origin:0 0;">Total DRAM Power</span><span class="f v" style="transform:scaleX(0.9191);transform-origin:100% 0;right:226px">2.031 W</span><span class="f v" style="transform:scaleX(0.9191);transform-origin:100% 0;right:153px">1.458 W</span><span class="f v" style="transform:scaleX(0.9191);transform-origin:100% 0;right:80px">2.058 W</span><span class="f v" style="transform:scaleX(0.9191);transform-origin:100% 0;right:7px">1.857 W</span></div>
<div class="r" style="top:465px"><svg><use href="#il"/></svg><span class="f n" style="transform:scaleX(0.9212);transform-origin:0 0;">Rest-of-Chip Power</span><span class="f v" style="transform:scaleX(0.9191);transform-origin:100% 0;right:226px">1.642 W</span><span class="f v" style="transform:scaleX(0.9191);transform-origin:100% 0;right:153px">1.051 W</span><span class="f v" style="transform:scaleX(0.9191);transform-origin:100% 0;right:80px">2.578 W</span><span class="f v" style="transform:scaleX(0.9191);transform-origin:100% 0;right:7px">1.309 W</span></div>
<div class="r" style="top:482px"><div class="bg" style="background:#f0f0f0"><i style="left:188px"></i><i style="left:261px"></i><i style="left:334px"></i><i style="left:407px"></i></div><svg><use href="#il"/></svg><span class="f n" style="transform:scaleX(0.8766);transform-origin:0 0;">PL1 Power Limit</span><span class="f v" style="transform:scaleX(0.9179);transform-origin:100% 0;right:226px">85.500 W</span><span class="f v" style="transform:scaleX(0.9179);transform-origin:100% 0;right:153px">75.000 W</span><span class="f v" style="transform:scaleX(0.9179);transform-origin:100% 0;right:80px">95.000 W</span><span class="f v" style="transform:scaleX(0.9179);transform-origin:100% 0;right:7px">86.707 W</span></div>
<div class="r" style="top:499px"><svg><use href="#il"/></svg><span class="f n" style="transform:scaleX(0.8766);transform-origin:0 0;">PL2 Power Limit</span><span class="f v" style="transform:scaleX(0.9167);transform-origin:100% 0;right:226px">200.000 W</span><span class="f v" style="transform:scaleX(0.9167);transform-origin:100% 0;right:153px">200.000 W</span><span class="f v" style="transform:scaleX(0.9167);transform-origin:100% 0;right:80px">200.000 W</span><span class="f v" style="transform:scaleX(0.9167);transform-origin:100% 0;right:7px">200.000 W</span></div>
<div class="r" style="top:516px"><div class="bg" style="background:#f0f0f0"><i style="left:188px"></i><i style="left:261px"></i><i style="left:334px"></i><i style="left:407px"></i></div><svg><use href="#ic"/></svg><span class="f n" style="transform:scaleX(0.9109);transform-origin:0 0;">IA OC Ratio Limit</span><span class="f v" style="transform:scaleX(0.9330);transform-origin:100% 0;right:226px">53.0 x</span><span class="f v" style="transform:scaleX(0.9330);transform-origin:100% 0;right:153px">53.0 x</span><span class="f v" style="transform:scaleX(0.9330);transform-origin:100% 0;right:80px">53.0 x</span><span class="f v" style="transform:scaleX(0.9330);transform-origin:100% 0;right:7px">53.0 x</span></div>
<div class="r" style="top:533px"></div>
<div class="r g" style="top:550px"><div class="bg" style="background:#d9d9d9;height:16px;border-bottom:1px solid #f0f0f0"><i style="left:188px"></i><i style="left:261px"></i><i style="left:334px"></i><i style="left:407px"></i></div><svg><use href="#ig"/></svg><span class="f n" style="transform:scaleX(0.8979);transform-origin:0 0;">S.M.A.R.T.: SAMSUNG MZVLB2T0H...</span></div>
<div class="r" style="top:567px"><svg><use href="#it"/></svg><span class="f n" style="transform:scaleX(0.9359);transform-origin:0 0;">Drive Temperature</span><span class="f v" style="transform:scaleX(0.9113);transform-origin:100% 0;right:226px">41 °C</span><span class="f v" style="transform:scaleX(0.9113);transform-origin:100% 0;right:153px">40 °C</span><span class="f v" style="transform:scaleX(0.9113);transform-origin:100% 0;right:80px">41 °C</span><span class="f v" style="transform:scaleX(0.9113);transform-origin:100% 0;right:7px">40 °C</span></div>
<div class="r" style="top:584px"><div class="bg" style="background:#f0f0f0"><i style="left:188px"></i><i style="left:261px"></i><i style="left:334px"></i><i style="left:407px"></i></div><svg><use href="#it"/></svg><span class="f n" style="transform:scaleX(0.9374);transform-origin:0 0;">Drive Temperature 2</span><span class="f v" style="transform:scaleX(0.9113);transform-origin:100% 0;right:226px">50 °C</span><span class="f v" style="transform:scaleX(0.9113);transform-origin:100% 0;right:153px">50 °C</span><span class="f v" style="transform:scaleX(0.9113);transform-origin:100% 0;right:80px">64 °C</span><span class="f v" style="transform:scaleX(0.9113);transform-origin:100% 0;right:7px">52 °C</span></div>
<div class="r" style="top:601px"></div>
<div class="r g" style="top:618px"><div class="bg" style="background:#d9d9d9;height:16px;border-bottom:1px solid #f0f0f0"><i style="left:188px"></i><i style="left:261px"></i><i style="left:334px"></i><i style="left:407px"></i></div><svg><use href="#ig"/></svg><span class="f n" style="transform:scaleX(0.9539);transform-origin:0 0;">GPU [#0]: NVIDIA:</span></div>
<div class="r" style="top:635px"><svg><use href="#it"/></svg><span class="f n" style="transform:scaleX(0.9071);transform-origin:0 0;">GPU Temperature</span><span class="f v" style="transform:scaleX(0.9113);transform-origin:100% 0;right:226px">50 °C</span><span class="f v" style="transform:scaleX(0.9113);transform-origin:100% 0;right:153px">48 °C</span><span class="f v" style="transform:scaleX(0.9113);transform-origin:100% 0;right:80px">50 °C</span><span class="f v" style="transform:scaleX(0.9113);transform-origin:100% 0;right:7px">50 °C</span></div>
<div class="r" style="top:652px"><div class="bg" style="background:#f0f0f0"><i style="left:188px"></i><i style="left:261px"></i><i style="left:334px"></i><i style="left:407px"></i></div><svg><use href="#il"/></svg><span class="f n" style="transform:scaleX(0.8815);transform-origin:0 0;">GPU Core Voltage</span><span class="f v" style="transform:scaleX(0.9119);transform-origin:100% 0;right:226px">0.625 V</span><span class="f v" style="transform:scaleX(0.9119);transform-origin:100% 0;right:153px">0.625 V</span><span class="f v" style="transform:scaleX(0.9119);transform-origin:100% 0;right:80px">0.625 V</span><span class="f v" style="transform:scaleX(0.9119);transform-origin:100% 0;right:7px">0.625 V</span></div>
<div class="r" style="top:669px"><svg><use href="#il"/></svg><span class="f n" style="transform:scaleX(0.8953);transform-origin:0 0;">GPU FBVDD Input Voltage</span><span class="f v" style="transform:scaleX(0.9113);transform-origin:100% 0;right:226px">16.308 V</span><span class="f v" style="transform:scaleX(0.9113);transform-origin:100% 0;right:153px">16.285 V</span><span class="f v" style="transform:scaleX(0.9113);transform-origin:100% 0;right:80px">16.882 V</span><span class="f v" style="transform:scaleX(0.9113);transform-origin:100% 0;right:7px">16.443 V</span></div>
<div class="r" style="top:686px"><div class="bg" style="background:#f0f0f0"><i style="left:188px"></i><i style="left:261px"></i><i style="left:334px"></i><i style="left:407px"></i></div><svg><use href="#il"/></svg><span class="f n" style="transform:scaleX(0.9371);transform-origin:0 0;">GPU 8-pin #1 Input Voltage</span><span class="f v" style="transform:scaleX(0.9113);transform-origin:100% 0;right:226px">16.250 V</span><span class="f v" style="transform:scaleX(0.9113);transform-origin:100% 0;right:153px">16.250 V</span><span class="f v" style="transform:scaleX(0.9113);transform-origin:100% 0;right:80px">16.775 V</span><span class="f v" style="transform:scaleX(0.9113);transform-origin:100% 0;right:7px">16.374 V</span></div>
<div class="r" style="top:703px"><svg><use href="#il"/></svg><span class="f n" style="transform:scaleX(0.8603);transform-origin:0 0;">GPU Power</span><span class="f v" style="transform:scaleX(0.9179);transform-origin:100% 0;right:226px">19.484 W</span><span class="f v" style="transform:scaleX(0.9179);transform-origin:100% 0;right:153px">14.904 W</span><span class="f v" style="transform:scaleX(0.9179);transform-origin:100% 0;right:80px">21.755 W</span><span class="f v" style="transform:scaleX(0.9179);transform-origin:100% 0;right:7px">17.662 W</span></div>
<div class="r" style="top:720px"><div class="bg" style="background:#f0f0f0"><i style="left:188px"></i><i style="left:261px"></i><i style="left:334px"></i><i style="left:407px"></i></div><svg><use href="#il"/></svg><span class="f n" style="transform:scaleX(0.8968);transform-origin:0 0;">GPU Core (NVVDD) Input Power (sum)</span><span class="f v" style="transform:scaleX(0.9191);transform-origin:100% 0;right:226px">5.203 W</span><span class="f v" style="transform:scaleX(0.9191);transform-origin:100% 0;right:153px">3.774 W</span><span class="f v" style="transform:scaleX(0.9191);transform-origin:100% 0;right:80px">5.634 W</span><span class="f v" style="transform:scaleX(0.9191);transform-origin:100% 0;right:7px">4.607 W</span></div>
<div class="r" style="top:737px"><svg><use href="#il"/></svg><span class="f n" style="transform:scaleX(0.8872);transform-origin:0 0;">GPU FBVDD Input Power</span><span class="f v" style="transform:scaleX(0.9191);transform-origin:100% 0;right:226px">8.415 W</span><span class="f v" style="transform:scaleX(0.9191);transform-origin:100% 0;right:153px">4.574 W</span><span class="f v" style="transform:scaleX(0.9179);transform-origin:100% 0;right:80px">10.005 W</span><span class="f v" style="transform:scaleX(0.9191);transform-origin:100% 0;right:7px">6.892 W</span></div>
<div class="r" style="top:754px"><div class="bg" style="background:#f0f0f0"><i style="left:188px"></i><i style="left:261px"></i><i style="left:334px"></i><i style="left:407px"></i></div><svg><use href="#il"/></svg><span class="f n" style="transform:scaleX(0.9309);transform-origin:0 0;">GPU 8-pin #1 Input Power</span><span class="f v" style="transform:scaleX(0.9179);transform-origin:100% 0;right:226px">13.618 W</span><span class="f v" style="transform:scaleX(0.9191);transform-origin:100% 0;right:153px">8.819 W</span><span class="f v" style="transform:scaleX(0.9179);transform-origin:100% 0;right:80px">15.654 W</span><span class="f v" style="transform:scaleX(0.9341);transform-origin:100% 0;right:7px">11.498 W</span></div>
<div class="r" style="top:771px"><svg><use href="#il"/></svg><span class="f n" style="transform:scaleX(0.9194);transform-origin:0 0;">GPU PCIe +3.3V Input Power (est)</span><span class="f v" style="transform:scaleX(0.9179);transform-origin:100% 0;right:226px">12.000 W</span><span class="f v" style="transform:scaleX(0.9179);transform-origin:100% 0;right:153px">12.000 W</span><span class="f v" style="transform:scaleX(0.9179);transform-origin:100% 0;right:80px">12.000 W</span><span class="f v" style="transform:scaleX(0.9179);transform-origin:100% 0;right:7px">12.000 W</span></div>
<div class="r" style="top:788px"><div class="bg" style="background:#f0f0f0"><i style="left:188px"></i><i style="left:261px"></i><i style="left:334px"></i><i style="left:407px"></i></div><svg><use href="#il"/></svg><span class="f n" style="transform:scaleX(0.9073);transform-origin:0 0;">GPU Core (NVVDD2) Input Power (s...</span><span class="f v" style="transform:scaleX(0.9191);transform-origin:100% 0;right:226px">5.203 W</span><span class="f v" style="transform:scaleX(0.9191);transform-origin:100% 0;right:153px">3.774 W</span><span class="f v" style="transform:scaleX(0.9191);transform-origin:100% 0;right:80px">5.634 W</span><span class="f v" style="transform:scaleX(0.9191);transform-origin:100% 0;right:7px">4.607 W</span></div>
<div class="r" style="top:805px"><svg><use href="#il"/></svg><span class="f n" style="transform:scaleX(0.9016);transform-origin:0 0;">GPU Input PP Source Power (sum)</span><span class="f v" style="transform:scaleX(0.9179);transform-origin:100% 0;right:226px">14.517 W</span><span class="f v" style="transform:scaleX(0.9179);transform-origin:100% 0;right:153px">10.664 W</span><span class="f v" style="transform:scaleX(0.9179);transform-origin:100% 0;right:80px">16.120 W</span><span class="f v" style="transform:scaleX(0.9179);transform-origin:100% 0;right:7px">12.989 W</span></div>
<div class="r" style="top:822px"><div class="bg" style="background:#f0f0f0"><i style="left:188px"></i><i style="left:261px"></i><i style="left:334px"></i><i style="left:407px"></i></div><svg><use href="#il"/></svg><span class="f n" style="transform:scaleX(0.8930);transform-origin:0 0;">GPU Core (NVVDD) Output Power</span><span class="f v" style="transform:scaleX(0.9191);transform-origin:100% 0;right:226px">0.214 W</span><span class="f v" style="transform:scaleX(0.9191);transform-origin:100% 0;right:153px">0.208 W</span><span class="f v" style="transform:scaleX(0.9191);transform-origin:100% 0;right:80px">0.516 W</span><span class="f v" style="transform:scaleX(0.9191);transform-origin:100% 0;right:7px">0.248 W</span></div>
<div class="r" style="top:839px"><svg><use href="#il"/></svg><span class="f n" style="transform:scaleX(0.8930);transform-origin:0 0;">GPU Core (NVVDD) Output Power</span><span class="f v" style="transform:scaleX(0.9191);transform-origin:100% 0;right:226px">1.005 W</span><span class="f v" style="transform:scaleX(0.9191);transform-origin:100% 0;right:153px">0.000 W</span><span class="f v" style="transform:scaleX(0.9191);transform-origin:100% 0;right:80px">1.053 W</span><span class="f v" style="transform:scaleX(0.9191);transform-origin:100% 0;right:7px">0.284 W</span></div>
<div class="r" style="top:856px"><div class="bg" style="background:#f0f0f0"><i style="left:188px"></i><i style="left:261px"></i><i style="left:334px"></i><i style="left:407px"></i></div><svg><use href="#ic"/></svg><span class="f n" style="transform:scaleX(0.8454);transform-origin:0 0;">GPU Clock</span><span class="f v" style="transform:scaleX(0.8972);transform-origin:100% 0;right:226px">210.0 MHz</span><span class="f v" style="transform:scaleX(0.8972);transform-origin:100% 0;right:153px">210.0 MHz</span><span class="f v" style="transform:scaleX(0.8972);transform-origin:100% 0;right:80px">270.0 MHz</span><span class="f v" style="transform:scaleX(0.8972);transform-origin:100% 0;right:7px">210.8 MHz</span></div>
<div class="r" style="top:873px"><svg><use href="#ic"/></svg><span class="f n" style="transform:scaleX(0.8764);transform-origin:0 0;">GPU Memory Clock</span><span class="f v" style="transform:scaleX(0.8972);transform-origin:100% 0;right:226px">101.3 MHz</span><span class="f v" style="transform:scaleX(0.8972);transform-origin:100% 0;right:153px">101.3 MHz</span><span class="f v" style="transform:scaleX(0.8972);transform-origin:100% 0;right:80px">101.3 MHz</span><span class="f v" style="transform:scaleX(0.8972);transform-origin:100% 0;right:7px">101.3 MHz</span></div>
<div class="r" style="top:890px"><div class="bg" style="background:#f0f0f0"><i style="left:188px"></i><i style="left:261px"></i><i style="left:334px"></i><i style="left:407px"></i></div><svg><use href="#ic"/></svg><span class="f n" style="transform:scaleX(0.8680);transform-origin:0 0;">GPU Video Clock</span><span class="f v" style="transform:scaleX(0.8972);transform-origin:100% 0;right:226px">555.0 MHz</span><span class="f v" style="transform:scaleX(0.8972);transform-origin:100% 0;right:153px">555.0 MHz</span><span class="f v" style="transform:scaleX(0.8972);transform-origin:100% 0;right:80px">555.0 MHz</span><span class="f v" style="transform:scaleX(0.8972);transform-origin:100% 0;right:7px">555.0 MHz</span></div>
<div class="r" style="top:907px"><svg><use href="#ic"/></svg><span class="f n" style="transform:scaleX(0.8644);transform-origin:0 0;">GPU Core Load</span><span class="f v" style="transform:scaleX(0.9594);transform-origin:100% 0;right:226px">20.0 %</span><span class="f v" style="transform:scaleX(0.9707);transform-origin:100% 0;right:153px">0.0 %</span><span class="f v" style="transform:scaleX(0.9594);transform-origin:100% 0;right:80px">46.0 %</span><span class="f v" style="transform:scaleX(0.9707);transform-origin:100% 0;right:7px">3.4 %</span></div>
<div class="r" style="top:924px"><div class="bg" style="background:#f0f0f0"><i style="left:188px"></i><i style="left:261px"></i><i style="left:334px"></i><i style="left:407px"></i></div></div>
<div class="r g" style="top:941px"><div class="bg" style="background:#d9d9d9;height:16px;border-bottom:1px solid #f0f0f0"><i style="left:188px"></i><i style="left:261px"></i><i style="left:334px"></i><i style="left:407px"></i></div><svg><use href="#ig"/></svg><span class="f n" style="transform:scaleX(0.9214);transform-origin:0 0;">Battery: MSI BIF0_9</span></div>
<div class="r" style="top:958px"><div class="bg" style="background:#f0f0f0"><i style="left:188px"></i><i style="left:261px"></i><i style="left:334px"></i><i style="left:407px"></i></div><svg><use href="#il"/></svg><span class="f n" style="transform:scaleX(0.9260);transform-origin:0 0;">Battery Voltage</span><span class="f v" style="transform:scaleX(0.9113);transform-origin:100% 0;right:226px">16.349 V</span><span class="f v" style="transform:scaleX(0.9113);transform-origin:100% 0;right:153px">16.345 V</span><span class="f v" style="transform:scaleX(0.9113);transform-origin:100% 0;right:80px">16.798 V</span><span class="f v" style="transform:scaleX(0.9113);transform-origin:100% 0;right:7px">16.489 V</span></div>
<div class="sb"><div class="th"></div><svg style="position:absolute;left:0;top:0" width="15" height="945" viewBox="0 0 15 945"><path d="M4 12L7.5 8.5L11 12" stroke="#505050" stroke-width="1.6" fill="none"/><path d="M4.2 935L7.5 938.4L10.8 935" stroke="#505050" stroke-width="2" fill="none"/></svg></div>
<div class="tbl"></div><div class="tb"></div>
<div class="tbn" style="left:2px"><svg width="40" height="33" viewBox="0 0 40 33"><path d="M3.7 17L10.7 8.9V13.6H17.5V20.7H10.7V25.6Z" fill="#2a8fe6" stroke="#eaf4fc" stroke-width=".8"/><path d="M35.7 17L28.2 8.9V13.6H21.4V20.7H28.2V25.6Z" fill="#2a8fe6" stroke="#eaf4fc" stroke-width=".8"/></svg></div>
<div class="tbn" style="left:46px;background:#d0d0d0;border-color:#cacaca"><svg width="40" height="33" viewBox="0 0 40 33"><path d="M18.3 17L11.3 8.9V13.6H4.5V20.7H11.3V25.6Z" fill="#62abe6" stroke="#d6e4ee" stroke-width=".8"/><path d="M18.9 17L25.9 8.9V13.6H33.1V20.7H25.9V25.6Z" fill="#62abe6" stroke="#d6e4ee" stroke-width=".8"/></svg></div>
<div class="tbn" style="left:224px"><svg width="40" height="33" viewBox="0 0 40 33"><defs><linearGradient id="gmon" x1="0" x2="1" y1="0" y2="1"><stop offset="0" stop-color="#1d6fc4"/><stop offset=".5" stop-color="#3fa0ee"/><stop offset="1" stop-color="#1b78d0"/></linearGradient></defs><path d="M20 9.2H29.3V16" stroke="#8e8e8e" stroke-width="1.2" fill="none"/><ellipse cx="11.6" cy="17.4" rx="4.6" ry="1.6" fill="#8c8c8c"/><path d="M10 13h3.4v4H10Z" fill="#9a9a9a"/><path d="M5.8 2.1L20 3.9L18.2 16.7L4.1 11.9Z" fill="url(#gmon)" stroke="#3c5f86" stroke-width=".9"/><ellipse cx="28.4" cy="30.2" rx="4.6" ry="1.6" fill="#8c8c8c"/><path d="M26.6 26h3.4v4h-3.4Z" fill="#9a9a9a"/><path d="M20.4 15.4L35 16.7L32.8 28.2L18.7 25.1Z" fill="url(#gmon)" stroke="#3c5f86" stroke-width=".9"/></svg></div>
<div style="position:absolute;left:291px;top:994px;font-size:11.6px;-webkit-text-stroke:.2px #000;line-height:16px;color:#000;white-space:nowrap"><span class="f" style="transform:scaleX(0.9822);transform-origin:0 0;">0:07:13</span></div>
<div class="tbn" style="left:335px;border:2px solid #0a6fc8;background:#e1e1e1;overflow:hidden"><svg width="38" height="31" viewBox="0 0 38 31"><circle cx="19" cy="15.7" r="15.6" fill="#fdfdfd" stroke="#3a3a3a" stroke-width="1"/><path d="M25.10 5.13L26.30 3.06M29.57 9.60L31.64 8.40M29.57 21.80L31.64 23.00M25.10 26.27L26.30 28.34M12.90 26.27L11.70 28.34M8.43 21.80L6.36 23.00M8.43 9.60L6.36 8.40M12.90 5.13L11.70 3.06" stroke="#444" stroke-width="1"/><path d="M19.00 4.50L19.00 1.10M30.20 15.70L33.60 15.70M19.00 26.90L19.00 30.30M7.80 15.70L4.40 15.70" stroke="#333" stroke-width="1.8"/><path d="M20.4 2L19 15.7H26.6" stroke="#111" stroke-width="2" fill="none"/></svg></div>
<div class="tbn" style="left:380px"><svg width="40" height="33" viewBox="0 0 40 33"><path d="M8 28.4h24v1.6H8Z" fill="#cfcfcf"/><path d="M9.4 2.1H26.6L31.2 6.8V28.3H9.4Z" fill="#fbfbfb" stroke="#c4c4c4" stroke-width=".9"/><path d="M26.6 2.1V6.8H31.2" fill="#eee" stroke="#c4c4c4" stroke-width=".8"/><path d="M12.5 7h13M12.5 9.5h16M12.5 12h16M12.5 14.5h16M12.5 17h16M12.5 19.5h16M12.5 22h12M12.5 24.5h10M16.5 6.5v18.5M21.5 6.5v18.5M26 9v11" stroke="#d6d6d6" stroke-width=".9"/><path d="M27 18.3h4.4v4.2h4v4.4h-4v4.1H27v-4.1h-4v-4.4h4Z" fill="#acd94c" stroke="#8abf2c" stroke-width=".9"/></svg></div>
<div class="tbn" style="left:426px"><svg width="40" height="33" viewBox="0 0 40 33"><defs><linearGradient id="ggr" x1="0" x2="1" y1="0" y2="1"><stop offset="0" stop-color="#eeeeee"/><stop offset=".5" stop-color="#c6c6c6"/><stop offset="1" stop-color="#949494"/></linearGradient></defs><g transform="translate(19.5 16.6)"><g fill="url(#ggr)" stroke="#a2a2a2" stroke-width=".7"><rect x="-3.6" y="-15.4" width="7.2" height="8" rx="1.4" transform="rotate(10)"/><rect x="-3.6" y="-15.4" width="7.2" height="8" rx="1.4" transform="rotate(55)"/><rect x="-3.6" y="-15.4" width="7.2" height="8" rx="1.4" transform="rotate(100)"/><rect x="-3.6" y="-15.4" width="7.2" height="8" rx="1.4" transform="rotate(145)"/><rect x="-3.6" y="-15.4" width="7.2" height="8" rx="1.4" transform="rotate(190)"/><rect x="-3.6" y="-15.4" width="7.2" height="8" rx="1.4" transform="rotate(235)"/><rect x="-3.6" y="-15.4" width="7.2" height="8" rx="1.4" transform="rotate(280)"/><rect x="-3.6" y="-15.4" width="7.2" height="8" rx="1.4" transform="rotate(325)"/><circle r="11.8"/></g><circle r="7.4" fill="none" stroke="#a2a2a2" stroke-width="2.2"/><circle r="5.8" fill="#dedede" stroke="#8e8e8e" stroke-width=".8"/></g></svg></div>
<div class="tbn" style="left:473px"><svg width="40" height="33" viewBox="0 0 40 33"><path d="M11.6 8.2L28.4 25M28.4 8.2L11.6 25" stroke="url(#gbx)" stroke-width="8.6" fill="none"/></svg></div>
</div>
</body></html>
